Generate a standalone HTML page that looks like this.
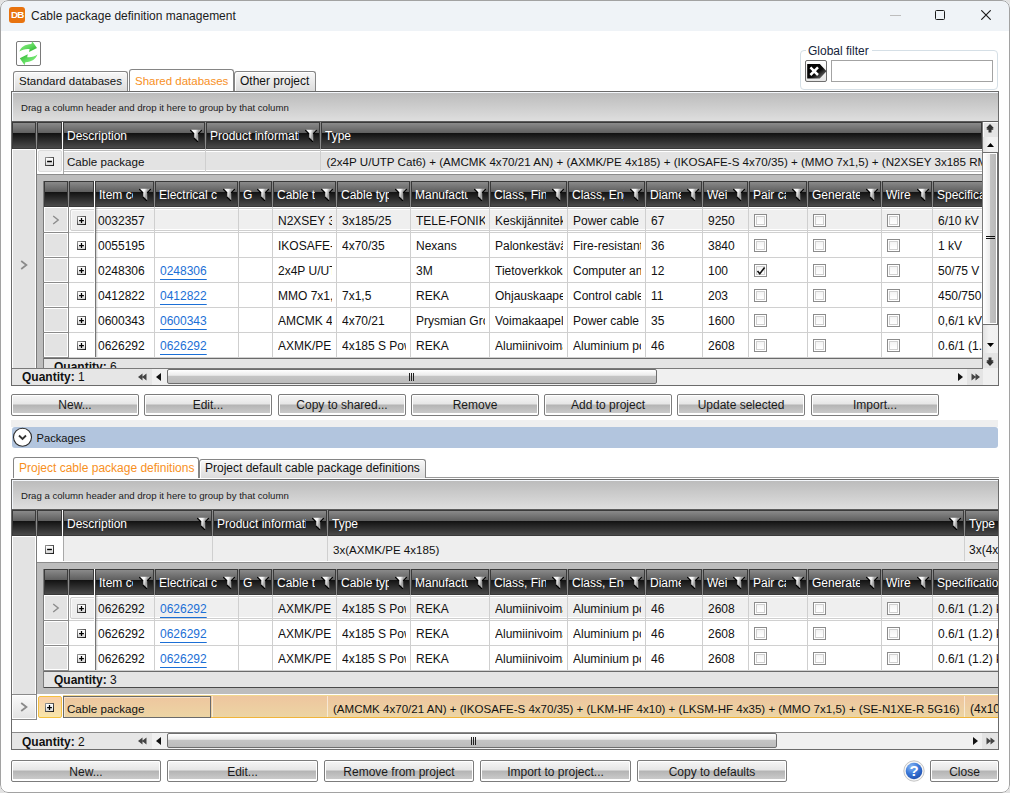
<!DOCTYPE html><html><head><meta charset="utf-8"><style>
*{margin:0;padding:0;box-sizing:border-box}
html,body{width:1010px;height:793px;overflow:hidden;background:#e2e2e2}
#w{position:absolute;left:0;top:0;width:1010px;height:793px;background:#fff;border-radius:8px;overflow:hidden;font-family:"Liberation Sans",sans-serif}
#w div{position:absolute}
#w svg{display:block}
#w span.t{position:absolute;white-space:nowrap;font-family:"Liberation Sans",sans-serif}
</style></head><body><div id="w">
<svg width="0" height="0" style="position:absolute"><defs><linearGradient id="fg" x1="0" y1="0" x2="1" y2="0.3"><stop offset="0" stop-color="#fff"/><stop offset="0.45" stop-color="#f4f4f4"/><stop offset="0.75" stop-color="#9a9a9a"/><stop offset="1" stop-color="#e0e0e0"/></linearGradient><linearGradient id="pb" x1="0" y1="0" x2="0" y2="1"><stop offset="0" stop-color="#fdfdfd"/><stop offset="0.5" stop-color="#f2f2f2"/><stop offset="1" stop-color="#d6d6d6"/></linearGradient><linearGradient id="pbs" x1="0" y1="0" x2="1" y2="1"><stop offset="0" stop-color="#a0a0a0"/><stop offset="0.5" stop-color="#505050"/><stop offset="1" stop-color="#151515"/></linearGradient></defs></svg>
<div style="left:0px;top:0px;width:1010px;height:31px;background:#eff3f7;"></div>
<div style="left:9px;top:7px;width:16px;height:16px;background:#e8730f;border-radius:3px;"></div>
<span class="t" style="left:11px;top:8.30px;font-size:9.8px;line-height:13px;color:#fff;font-weight:700;text-align:left;letter-spacing:-0.8px;">DB</span>
<span class="t" style="left:31px;top:7.64px;font-size:12px;line-height:16px;color:#1b1b1b;font-weight:400;text-align:left;">Cable package definition management</span>
<div style="left:890px;top:15px;width:11px;height:1px;background:#bdbdbd;"></div>
<div style="left:935px;top:10px;width:10px;height:10px;border:1px solid #1a1a1a;border-radius:1.5px;"></div>
<div style="left:981px;top:10px;width:10px;height:10px"><svg width="10" height="10"><path d="M0.3 0.3 L9.7 9.7 M9.7 0.3 L0.3 9.7" stroke="#1a1a1a" stroke-width="1.15"/></svg></div>
<div style="left:16px;top:41px;width:25px;height:25px;border:1px solid #7a7a7a;border-radius:2px;background:#fff;"></div>
<div style="left:12px;top:37px;width:34px;height:33px"><svg width="34" height="33" viewBox="0 0 34 33">
<defs><linearGradient id="gr" x1="0" y1="0" x2="1" y2="1"><stop offset="0" stop-color="#98f28a"/><stop offset="0.6" stop-color="#5ad65a"/><stop offset="1" stop-color="#22a822"/></linearGradient>
<linearGradient id="gr2" x1="1" y1="1" x2="0" y2="0"><stop offset="0" stop-color="#98f28a"/><stop offset="0.5" stop-color="#66e066"/><stop offset="1" stop-color="#2fb42f"/></linearGradient></defs>
<path d="M7.4 14.6 C8.8 10.2 13 7.2 19.4 7.0 L20.2 4.2 L25 10.9 L17 15 L17.6 12 C13.6 11.6 10.2 12.4 7.4 14.6 Z" fill="url(#gr)"/>
<path d="M25.4 17.6 C24 22 19.8 25 13.4 25.2 L12.6 28.3 L7.8 21.3 L15.8 17.2 L15.2 20.2 C19.2 20.6 22.6 19.8 25.4 17.6 Z" fill="url(#gr2)"/>
</svg></div>
<div style="left:800px;top:50px;width:198px;height:40px;border:1px solid #d5dfe6;border-radius:4px;"></div>
<div style="left:806px;top:44px;width:66px;height:12px;background:#fff;"></div>
<span class="t" style="left:808px;top:42.84px;font-size:12px;line-height:16px;color:#15233a;font-weight:400;text-align:left;">Global filter</span>
<div style="left:805px;top:60px;width:22px;height:22px;border:1px solid #6e6e6e;border-radius:2px;background:linear-gradient(#fff,#e6e6e6);"></div>
<div style="left:806px;top:63px;width:21px;height:17px"><svg width="21" height="17" viewBox="0 0 21 17">
<defs><linearGradient id="tg" x1="0" y1="0" x2="1" y2="1"><stop offset="0" stop-color="#000"/><stop offset="0.55" stop-color="#0a0a0a"/><stop offset="1" stop-color="#9a9a9a"/></linearGradient></defs>
<path d="M1.2 1 L13.8 1 L20.5 8.2 L13.8 15.6 L1.2 15.6 Z" fill="url(#tg)"/>
<path d="M4.4 4.4 L12 12 M12 4.4 L4.4 12" stroke="#fff" stroke-width="2.5"/>
</svg></div>
<div style="left:831px;top:60px;width:162px;height:22px;border:1px solid #a3a3a3;background:#fff;"></div>
<div style="left:13px;top:71px;width:115px;height:20px;border:1px solid #858585;border-bottom:none;border-radius:3px 3px 0 0;background:linear-gradient(#f8f8f8,#dcdcdc);box-shadow:inset 1px 1px 0 #fff;"></div>
<span class="t" style="left:19px;top:73.52px;font-size:11.5px;line-height:15px;color:#111;font-weight:400;text-align:left;">Standard databases</span>
<div style="left:234px;top:71px;width:82px;height:20px;border:1px solid #858585;border-bottom:none;border-radius:3px 3px 0 0;background:linear-gradient(#f8f8f8,#dcdcdc);box-shadow:inset 1px 1px 0 #fff;"></div>
<span class="t" style="left:240px;top:72.84px;font-size:12px;line-height:16px;color:#111;font-weight:400;text-align:left;">Other project</span>
<div style="left:129px;top:69px;width:105px;height:22px;border:1px solid #858585;border-bottom:none;border-radius:3px 3px 0 0;background:#fff;"></div>
<span class="t" style="left:135px;top:73.52px;font-size:11.5px;line-height:15px;color:#f7901e;font-weight:400;text-align:left;">Shared databases</span>
<div style="left:11px;top:91px;width:988px;height:295px;border:1px solid #6b6b6b;background:#fff;"></div>
<div style="left:12px;top:92px;width:986px;height:1px;background:#f4f7fb;"></div>
<div style="left:12px;top:93px;width:986px;height:28px;background:linear-gradient(#bcbcbc,#dedede);"></div>
<div style="left:12px;top:92px;width:1px;height:29px;background:#f4f7fb;"></div>
<span class="t" style="left:21px;top:102.17px;font-size:9.6px;line-height:12px;color:#1a1a1a;font-weight:400;text-align:left;">Drag a column header and drop it here to group by that column</span>
<div style="left:12px;top:121px;width:986px;height:1px;background:#5c5c5c;"></div>
<div style="left:12px;top:122px;width:24px;height:27px;background:linear-gradient(#8e8e8e 0%,#5e5e5e 42%,#111 42%,#1c1c1c 52%,#4e4e4e 100%);box-shadow:inset 0 0 0 1px #3a3a3a;"></div>
<div style="left:36px;top:122px;width:1px;height:27px;background:#8a8a8a;"></div>
<div style="left:37px;top:122px;width:25px;height:27px;background:linear-gradient(#8e8e8e 0%,#5e5e5e 42%,#111 42%,#1c1c1c 52%,#4e4e4e 100%);box-shadow:inset 0 0 0 1px #3a3a3a;"></div>
<div style="left:62px;top:122px;width:1px;height:27px;background:#fff;"></div>
<div style="left:63px;top:122px;width:142px;height:27px;background:linear-gradient(#8e8e8e 0%,#5e5e5e 42%,#111 42%,#1c1c1c 52%,#4e4e4e 100%);box-shadow:inset 0 0 0 1px #3a3a3a;"></div>
<div style="left:205px;top:122px;width:1px;height:27px;background:#8a8a8a;"></div>
<div style="left:67px;top:122px;width:117px;height:27px;overflow:hidden">
<span class="t" style="left:0px;top:6.34px;font-size:12px;line-height:16px;color:#fff;font-weight:400;text-align:left;">Description</span>
</div>
<div style="left:190px;top:129px;width:13px;height:13px"><svg width="13" height="13" viewBox="0 0 13 13"><path d="M1.2 0.8 L10.8 0.8 L8.2 4.2 L8.2 12.2 L4.3 8.6 L4.3 4.2 Z" fill="url(#fg)"/><path d="M0.2 1.1 L3.9 4.9 M11.8 1.1 L8.1 4.9 M3.9 9.1 L7.9 13" fill="none" stroke="#000" stroke-width="1.05"/></svg></div>
<div style="left:206px;top:122px;width:114px;height:27px;background:linear-gradient(#8e8e8e 0%,#5e5e5e 42%,#111 42%,#1c1c1c 52%,#4e4e4e 100%);box-shadow:inset 0 0 0 1px #3a3a3a;"></div>
<div style="left:320px;top:122px;width:1px;height:27px;background:#8a8a8a;"></div>
<div style="left:210px;top:122px;width:89px;height:27px;overflow:hidden">
<span class="t" style="left:0px;top:6.34px;font-size:12px;line-height:16px;color:#fff;font-weight:400;text-align:left;">Product information</span>
</div>
<div style="left:305px;top:129px;width:13px;height:13px"><svg width="13" height="13" viewBox="0 0 13 13"><path d="M1.2 0.8 L10.8 0.8 L8.2 4.2 L8.2 12.2 L4.3 8.6 L4.3 4.2 Z" fill="url(#fg)"/><path d="M0.2 1.1 L3.9 4.9 M11.8 1.1 L8.1 4.9 M3.9 9.1 L7.9 13" fill="none" stroke="#000" stroke-width="1.05"/></svg></div>
<div style="left:321px;top:122px;width:661px;height:27px;background:linear-gradient(#8e8e8e 0%,#5e5e5e 42%,#111 42%,#1c1c1c 52%,#4e4e4e 100%);box-shadow:inset 0 0 0 1px #3a3a3a;"></div>
<div style="left:982px;top:122px;width:1px;height:27px;background:#8a8a8a;"></div>
<div style="left:325px;top:122px;width:656px;height:27px;overflow:hidden">
<span class="t" style="left:0px;top:6.34px;font-size:12px;line-height:16px;color:#fff;font-weight:400;text-align:left;">Type</span>
</div>
<div style="left:12px;top:149px;width:24px;height:219px;background:#e3e3e3;box-shadow:inset 1px 1px 0 #fff;"></div>
<div style="left:35px;top:149px;width:1px;height:219px;background:#fff;"></div>
<div style="left:36px;top:149px;width:1px;height:219px;background:#7a7a7a;"></div>
<div style="left:20px;top:260px;width:8px;height:10px"><svg width="8" height="10" viewBox="0 0 8 10"><path d="M1.2 1 L6.4 5 L1.2 9" fill="none" stroke="#8a8a8a" stroke-width="1.7"/></svg></div>
<div style="left:37px;top:149px;width:26px;height:25px;background:#fff;"></div>
<div style="left:38px;top:150px;width:24px;height:22px;background:#eeeeee;border:1px solid #dcdcdc;border-radius:2px;"></div>
<div style="left:45px;top:157px;width:9px;height:9px"><svg width="9" height="9" viewBox="0 0 9 9"><rect x="0" y="0" width="9" height="9" fill="url(#pbs)"/><rect x="1" y="1" width="7" height="7" fill="url(#pb)"/><path d="M2.1 4.5 H6.9" stroke="#000" stroke-width="1.4"/></svg></div>
<div style="left:62px;top:122px;width:1px;height:52px;background:#fff;"></div>
<div style="left:63px;top:149px;width:919px;height:25px;background:#e3e3e3;box-shadow:inset 0 1px 0 #fff,inset 0 2px 0 #b8b8b8,inset 0 3px 0 #fff,inset 0 -1px 0 #fff,inset 0 -2px 0 #fff,inset 0 -3px 0 #b8b8b8,inset 0 -4px 0 #fff;"></div>
<div style="left:63px;top:149px;width:1px;height:25px;background:#a8a8a8;"></div>
<div style="left:205px;top:149px;width:1px;height:23px;background:#cfcfcf;"></div>
<div style="left:320px;top:149px;width:1px;height:23px;background:#cfcfcf;"></div>
<span class="t" style="left:67px;top:154.48px;font-size:11.6px;line-height:15px;color:#111;font-weight:400;text-align:left;">Cable package</span>
<div style="left:321px;top:149px;width:661px;height:23px;overflow:hidden">
<span class="t" style="left:5.5px;top:5.48px;font-size:11.6px;line-height:15px;color:#111;font-weight:400;text-align:left;">(2x4P U/UTP Cat6) + (AMCMK 4x70/21 AN) + (AXMK/PE 4x185) + (IKOSAFE-S 4x70/35) + (MMO 7x1,5) + (N2XSEY 3x185 RM/25)</span>
</div>
<div style="left:37px;top:174px;width:945px;height:194px;background:#bdbdbd;border-top:1px solid #8c8c8c;"></div>
<div style="left:0px;top:0px;width:982px;height:368px;overflow:hidden">
<div style="left:0px;top:0px;width:982px;height:800px;overflow:hidden">
<div style="left:43px;top:181px;width:2000px;height:177px;background:#fff;"></div>
<div style="left:43px;top:181px;width:1px;height:194px;background:#7a7a7a;"></div>
<div style="left:44px;top:181px;width:24px;height:26px;background:linear-gradient(#8e8e8e 0%,#5e5e5e 42%,#111 42%,#1c1c1c 52%,#4e4e4e 100%);box-shadow:inset 0 0 0 1px #3a3a3a;"></div>
<div style="left:68px;top:181px;width:1px;height:26px;background:#8a8a8a;"></div>
<div style="left:69px;top:181px;width:25px;height:26px;background:linear-gradient(#8e8e8e 0%,#5e5e5e 42%,#111 42%,#1c1c1c 52%,#4e4e4e 100%);box-shadow:inset 0 0 0 1px #3a3a3a;"></div>
<div style="left:95px;top:181px;width:59px;height:26px;background:linear-gradient(#8e8e8e 0%,#5e5e5e 42%,#111 42%,#1c1c1c 52%,#4e4e4e 100%);box-shadow:inset 0 0 0 1px #3a3a3a;"></div>
<div style="left:154px;top:181px;width:1px;height:26px;background:#8a8a8a;"></div>
<div style="left:99px;top:181px;width:34px;height:26px;overflow:hidden">
<span class="t" style="left:0px;top:5.84px;font-size:12px;line-height:16px;color:#fff;font-weight:400;text-align:left;">Item code</span>
</div>
<div style="left:139px;top:188px;width:13px;height:13px"><svg width="13" height="13" viewBox="0 0 13 13"><path d="M1.2 0.8 L10.8 0.8 L8.2 4.2 L8.2 12.2 L4.3 8.6 L4.3 4.2 Z" fill="url(#fg)"/><path d="M0.2 1.1 L3.9 4.9 M11.8 1.1 L8.1 4.9 M3.9 9.1 L7.9 13" fill="none" stroke="#000" stroke-width="1.05"/></svg></div>
<div style="left:155px;top:181px;width:83px;height:26px;background:linear-gradient(#8e8e8e 0%,#5e5e5e 42%,#111 42%,#1c1c1c 52%,#4e4e4e 100%);box-shadow:inset 0 0 0 1px #3a3a3a;"></div>
<div style="left:238px;top:181px;width:1px;height:26px;background:#8a8a8a;"></div>
<div style="left:159px;top:181px;width:58px;height:26px;overflow:hidden">
<span class="t" style="left:0px;top:5.84px;font-size:12px;line-height:16px;color:#fff;font-weight:400;text-align:left;">Electrical code</span>
</div>
<div style="left:223px;top:188px;width:13px;height:13px"><svg width="13" height="13" viewBox="0 0 13 13"><path d="M1.2 0.8 L10.8 0.8 L8.2 4.2 L8.2 12.2 L4.3 8.6 L4.3 4.2 Z" fill="url(#fg)"/><path d="M0.2 1.1 L3.9 4.9 M11.8 1.1 L8.1 4.9 M3.9 9.1 L7.9 13" fill="none" stroke="#000" stroke-width="1.05"/></svg></div>
<div style="left:239px;top:181px;width:33px;height:26px;background:linear-gradient(#8e8e8e 0%,#5e5e5e 42%,#111 42%,#1c1c1c 52%,#4e4e4e 100%);box-shadow:inset 0 0 0 1px #3a3a3a;"></div>
<div style="left:272px;top:181px;width:1px;height:26px;background:#8a8a8a;"></div>
<div style="left:243px;top:181px;width:10px;height:26px;overflow:hidden">
<span class="t" style="left:0px;top:5.84px;font-size:12px;line-height:16px;color:#fff;font-weight:400;text-align:left;">G</span>
</div>
<div style="left:257px;top:188px;width:13px;height:13px"><svg width="13" height="13" viewBox="0 0 13 13"><path d="M1.2 0.8 L10.8 0.8 L8.2 4.2 L8.2 12.2 L4.3 8.6 L4.3 4.2 Z" fill="url(#fg)"/><path d="M0.2 1.1 L3.9 4.9 M11.8 1.1 L8.1 4.9 M3.9 9.1 L7.9 13" fill="none" stroke="#000" stroke-width="1.05"/></svg></div>
<div style="left:273px;top:181px;width:63px;height:26px;background:linear-gradient(#8e8e8e 0%,#5e5e5e 42%,#111 42%,#1c1c1c 52%,#4e4e4e 100%);box-shadow:inset 0 0 0 1px #3a3a3a;"></div>
<div style="left:336px;top:181px;width:1px;height:26px;background:#8a8a8a;"></div>
<div style="left:277px;top:181px;width:38px;height:26px;overflow:hidden">
<span class="t" style="left:0px;top:5.84px;font-size:12px;line-height:16px;color:#fff;font-weight:400;text-align:left;">Cable type</span>
</div>
<div style="left:321px;top:188px;width:13px;height:13px"><svg width="13" height="13" viewBox="0 0 13 13"><path d="M1.2 0.8 L10.8 0.8 L8.2 4.2 L8.2 12.2 L4.3 8.6 L4.3 4.2 Z" fill="url(#fg)"/><path d="M0.2 1.1 L3.9 4.9 M11.8 1.1 L8.1 4.9 M3.9 9.1 L7.9 13" fill="none" stroke="#000" stroke-width="1.05"/></svg></div>
<div style="left:337px;top:181px;width:73px;height:26px;background:linear-gradient(#8e8e8e 0%,#5e5e5e 42%,#111 42%,#1c1c1c 52%,#4e4e4e 100%);box-shadow:inset 0 0 0 1px #3a3a3a;"></div>
<div style="left:410px;top:181px;width:1px;height:26px;background:#8a8a8a;"></div>
<div style="left:341px;top:181px;width:48px;height:26px;overflow:hidden">
<span class="t" style="left:0px;top:5.84px;font-size:12px;line-height:16px;color:#fff;font-weight:400;text-align:left;">Cable type</span>
</div>
<div style="left:395px;top:188px;width:13px;height:13px"><svg width="13" height="13" viewBox="0 0 13 13"><path d="M1.2 0.8 L10.8 0.8 L8.2 4.2 L8.2 12.2 L4.3 8.6 L4.3 4.2 Z" fill="url(#fg)"/><path d="M0.2 1.1 L3.9 4.9 M11.8 1.1 L8.1 4.9 M3.9 9.1 L7.9 13" fill="none" stroke="#000" stroke-width="1.05"/></svg></div>
<div style="left:411px;top:181px;width:78px;height:26px;background:linear-gradient(#8e8e8e 0%,#5e5e5e 42%,#111 42%,#1c1c1c 52%,#4e4e4e 100%);box-shadow:inset 0 0 0 1px #3a3a3a;"></div>
<div style="left:489px;top:181px;width:1px;height:26px;background:#8a8a8a;"></div>
<div style="left:415px;top:181px;width:53px;height:26px;overflow:hidden">
<span class="t" style="left:0px;top:5.84px;font-size:12px;line-height:16px;color:#fff;font-weight:400;text-align:left;">Manufacturer</span>
</div>
<div style="left:474px;top:188px;width:13px;height:13px"><svg width="13" height="13" viewBox="0 0 13 13"><path d="M1.2 0.8 L10.8 0.8 L8.2 4.2 L8.2 12.2 L4.3 8.6 L4.3 4.2 Z" fill="url(#fg)"/><path d="M0.2 1.1 L3.9 4.9 M11.8 1.1 L8.1 4.9 M3.9 9.1 L7.9 13" fill="none" stroke="#000" stroke-width="1.05"/></svg></div>
<div style="left:490px;top:181px;width:77px;height:26px;background:linear-gradient(#8e8e8e 0%,#5e5e5e 42%,#111 42%,#1c1c1c 52%,#4e4e4e 100%);box-shadow:inset 0 0 0 1px #3a3a3a;"></div>
<div style="left:567px;top:181px;width:1px;height:26px;background:#8a8a8a;"></div>
<div style="left:494px;top:181px;width:52px;height:26px;overflow:hidden">
<span class="t" style="left:0px;top:5.84px;font-size:12px;line-height:16px;color:#fff;font-weight:400;text-align:left;">Class, Finnish</span>
</div>
<div style="left:552px;top:188px;width:13px;height:13px"><svg width="13" height="13" viewBox="0 0 13 13"><path d="M1.2 0.8 L10.8 0.8 L8.2 4.2 L8.2 12.2 L4.3 8.6 L4.3 4.2 Z" fill="url(#fg)"/><path d="M0.2 1.1 L3.9 4.9 M11.8 1.1 L8.1 4.9 M3.9 9.1 L7.9 13" fill="none" stroke="#000" stroke-width="1.05"/></svg></div>
<div style="left:568px;top:181px;width:77px;height:26px;background:linear-gradient(#8e8e8e 0%,#5e5e5e 42%,#111 42%,#1c1c1c 52%,#4e4e4e 100%);box-shadow:inset 0 0 0 1px #3a3a3a;"></div>
<div style="left:645px;top:181px;width:1px;height:26px;background:#8a8a8a;"></div>
<div style="left:572px;top:181px;width:52px;height:26px;overflow:hidden">
<span class="t" style="left:0px;top:5.84px;font-size:12px;line-height:16px;color:#fff;font-weight:400;text-align:left;">Class, English</span>
</div>
<div style="left:630px;top:188px;width:13px;height:13px"><svg width="13" height="13" viewBox="0 0 13 13"><path d="M1.2 0.8 L10.8 0.8 L8.2 4.2 L8.2 12.2 L4.3 8.6 L4.3 4.2 Z" fill="url(#fg)"/><path d="M0.2 1.1 L3.9 4.9 M11.8 1.1 L8.1 4.9 M3.9 9.1 L7.9 13" fill="none" stroke="#000" stroke-width="1.05"/></svg></div>
<div style="left:646px;top:181px;width:56px;height:26px;background:linear-gradient(#8e8e8e 0%,#5e5e5e 42%,#111 42%,#1c1c1c 52%,#4e4e4e 100%);box-shadow:inset 0 0 0 1px #3a3a3a;"></div>
<div style="left:702px;top:181px;width:1px;height:26px;background:#8a8a8a;"></div>
<div style="left:650px;top:181px;width:31px;height:26px;overflow:hidden">
<span class="t" style="left:0px;top:5.84px;font-size:12px;line-height:16px;color:#fff;font-weight:400;text-align:left;">Diameter</span>
</div>
<div style="left:687px;top:188px;width:13px;height:13px"><svg width="13" height="13" viewBox="0 0 13 13"><path d="M1.2 0.8 L10.8 0.8 L8.2 4.2 L8.2 12.2 L4.3 8.6 L4.3 4.2 Z" fill="url(#fg)"/><path d="M0.2 1.1 L3.9 4.9 M11.8 1.1 L8.1 4.9 M3.9 9.1 L7.9 13" fill="none" stroke="#000" stroke-width="1.05"/></svg></div>
<div style="left:703px;top:181px;width:45px;height:26px;background:linear-gradient(#8e8e8e 0%,#5e5e5e 42%,#111 42%,#1c1c1c 52%,#4e4e4e 100%);box-shadow:inset 0 0 0 1px #3a3a3a;"></div>
<div style="left:748px;top:181px;width:1px;height:26px;background:#8a8a8a;"></div>
<div style="left:707px;top:181px;width:20px;height:26px;overflow:hidden">
<span class="t" style="left:0px;top:5.84px;font-size:12px;line-height:16px;color:#fff;font-weight:400;text-align:left;">Weight</span>
</div>
<div style="left:733px;top:188px;width:13px;height:13px"><svg width="13" height="13" viewBox="0 0 13 13"><path d="M1.2 0.8 L10.8 0.8 L8.2 4.2 L8.2 12.2 L4.3 8.6 L4.3 4.2 Z" fill="url(#fg)"/><path d="M0.2 1.1 L3.9 4.9 M11.8 1.1 L8.1 4.9 M3.9 9.1 L7.9 13" fill="none" stroke="#000" stroke-width="1.05"/></svg></div>
<div style="left:749px;top:181px;width:58px;height:26px;background:linear-gradient(#8e8e8e 0%,#5e5e5e 42%,#111 42%,#1c1c1c 52%,#4e4e4e 100%);box-shadow:inset 0 0 0 1px #3a3a3a;"></div>
<div style="left:807px;top:181px;width:1px;height:26px;background:#8a8a8a;"></div>
<div style="left:753px;top:181px;width:33px;height:26px;overflow:hidden">
<span class="t" style="left:0px;top:5.84px;font-size:12px;line-height:16px;color:#fff;font-weight:400;text-align:left;">Pair cable</span>
</div>
<div style="left:792px;top:188px;width:13px;height:13px"><svg width="13" height="13" viewBox="0 0 13 13"><path d="M1.2 0.8 L10.8 0.8 L8.2 4.2 L8.2 12.2 L4.3 8.6 L4.3 4.2 Z" fill="url(#fg)"/><path d="M0.2 1.1 L3.9 4.9 M11.8 1.1 L8.1 4.9 M3.9 9.1 L7.9 13" fill="none" stroke="#000" stroke-width="1.05"/></svg></div>
<div style="left:808px;top:181px;width:73px;height:26px;background:linear-gradient(#8e8e8e 0%,#5e5e5e 42%,#111 42%,#1c1c1c 52%,#4e4e4e 100%);box-shadow:inset 0 0 0 1px #3a3a3a;"></div>
<div style="left:881px;top:181px;width:1px;height:26px;background:#8a8a8a;"></div>
<div style="left:812px;top:181px;width:48px;height:26px;overflow:hidden">
<span class="t" style="left:0px;top:5.84px;font-size:12px;line-height:16px;color:#fff;font-weight:400;text-align:left;">Generate</span>
</div>
<div style="left:866px;top:188px;width:13px;height:13px"><svg width="13" height="13" viewBox="0 0 13 13"><path d="M1.2 0.8 L10.8 0.8 L8.2 4.2 L8.2 12.2 L4.3 8.6 L4.3 4.2 Z" fill="url(#fg)"/><path d="M0.2 1.1 L3.9 4.9 M11.8 1.1 L8.1 4.9 M3.9 9.1 L7.9 13" fill="none" stroke="#000" stroke-width="1.05"/></svg></div>
<div style="left:882px;top:181px;width:50px;height:26px;background:linear-gradient(#8e8e8e 0%,#5e5e5e 42%,#111 42%,#1c1c1c 52%,#4e4e4e 100%);box-shadow:inset 0 0 0 1px #3a3a3a;"></div>
<div style="left:932px;top:181px;width:1px;height:26px;background:#8a8a8a;"></div>
<div style="left:886px;top:181px;width:25px;height:26px;overflow:hidden">
<span class="t" style="left:0px;top:5.84px;font-size:12px;line-height:16px;color:#fff;font-weight:400;text-align:left;">Wire</span>
</div>
<div style="left:917px;top:188px;width:13px;height:13px"><svg width="13" height="13" viewBox="0 0 13 13"><path d="M1.2 0.8 L10.8 0.8 L8.2 4.2 L8.2 12.2 L4.3 8.6 L4.3 4.2 Z" fill="url(#fg)"/><path d="M0.2 1.1 L3.9 4.9 M11.8 1.1 L8.1 4.9 M3.9 9.1 L7.9 13" fill="none" stroke="#000" stroke-width="1.05"/></svg></div>
<div style="left:933px;top:181px;width:167px;height:26px;background:linear-gradient(#8e8e8e 0%,#5e5e5e 42%,#111 42%,#1c1c1c 52%,#4e4e4e 100%);box-shadow:inset 0 0 0 1px #3a3a3a;"></div>
<div style="left:1100px;top:181px;width:1px;height:26px;background:#8a8a8a;"></div>
<div style="left:937px;top:181px;width:142px;height:26px;overflow:hidden">
<span class="t" style="left:0px;top:5.84px;font-size:12px;line-height:16px;color:#fff;font-weight:400;text-align:left;">Specification</span>
</div>
<div style="left:1085px;top:188px;width:13px;height:13px"><svg width="13" height="13" viewBox="0 0 13 13"><path d="M1.2 0.8 L10.8 0.8 L8.2 4.2 L8.2 12.2 L4.3 8.6 L4.3 4.2 Z" fill="url(#fg)"/><path d="M0.2 1.1 L3.9 4.9 M11.8 1.1 L8.1 4.9 M3.9 9.1 L7.9 13" fill="none" stroke="#000" stroke-width="1.05"/></svg></div>
<div style="left:95px;top:207px;width:2000px;height:25px;background:#efefef;border-top:1px solid #fff;box-shadow:inset 0 1px 0 #cfcfcf,inset 0 2px 0 #fff,inset 0 -1px 0 #fff,inset 0 -2px 0 #cfcfcf,inset 0 -3px 0 #fff;"></div>
<div style="left:44px;top:207px;width:24px;height:25px;background:#e3e3e3;box-shadow:inset 0 0 0 1px #fff;"></div>
<div style="left:52px;top:215px;width:8px;height:10px"><svg width="8" height="10" viewBox="0 0 8 10"><path d="M1.2 1 L6.2 5 L1.2 9" fill="none" stroke="#8c8c8c" stroke-width="1.4"/></svg></div>
<div style="left:70px;top:209px;width:26px;height:22px;background:#eeeeee;border:1px solid #d0d0d0;border-radius:2px;box-shadow:inset 1px 1px 0 #fafafa;"></div>
<div style="left:77px;top:216px;width:9px;height:9px"><svg width="9" height="9" viewBox="0 0 9 9"><rect x="0" y="0" width="9" height="9" fill="url(#pbs)"/><rect x="1" y="1" width="7" height="7" fill="url(#pb)"/><path d="M2.1 4.5 H6.9 M4.5 2.1 V6.9" stroke="#000" stroke-width="1.25"/></svg></div>
<div style="left:98px;top:207px;width:55px;height:25px;overflow:hidden">
<span class="t" style="left:0px;top:5.84px;font-size:12px;line-height:16px;color:#111;font-weight:400;text-align:left;">0032357</span>
</div>
<div style="left:278px;top:207px;width:54px;height:25px;overflow:hidden">
<span class="t" style="left:0px;top:5.84px;font-size:12px;line-height:16px;color:#111;font-weight:400;text-align:left;">N2XSEY 3x185/25</span>
</div>
<div style="left:342px;top:207px;width:64px;height:25px;overflow:hidden">
<span class="t" style="left:0px;top:5.84px;font-size:12px;line-height:16px;color:#111;font-weight:400;text-align:left;">3x185/25</span>
</div>
<div style="left:416px;top:207px;width:69px;height:25px;overflow:hidden">
<span class="t" style="left:0px;top:5.84px;font-size:12px;line-height:16px;color:#111;font-weight:400;text-align:left;">TELE-FONIKA Kable</span>
</div>
<div style="left:495px;top:207px;width:68px;height:25px;overflow:hidden">
<span class="t" style="left:0px;top:5.84px;font-size:12px;line-height:16px;color:#111;font-weight:400;text-align:left;">Keskijännitekaapeli</span>
</div>
<div style="left:573px;top:207px;width:68px;height:25px;overflow:hidden">
<span class="t" style="left:0px;top:5.84px;font-size:12px;line-height:16px;color:#111;font-weight:400;text-align:left;">Power cable for medium</span>
</div>
<div style="left:651px;top:207px;width:47px;height:25px;overflow:hidden">
<span class="t" style="left:0px;top:5.84px;font-size:12px;line-height:16px;color:#111;font-weight:400;text-align:left;">67</span>
</div>
<div style="left:708px;top:207px;width:36px;height:25px;overflow:hidden">
<span class="t" style="left:0px;top:5.84px;font-size:12px;line-height:16px;color:#111;font-weight:400;text-align:left;">9250</span>
</div>
<div style="left:754px;top:214px;width:13px;height:13px;border:1px solid #8c8c8c;background:#fff;"></div>
<div style="left:756px;top:216px;width:9px;height:9px;border:1px solid #d0d0d0;background:linear-gradient(#f4f4f4,#fff);"></div>
<div style="left:813px;top:214px;width:13px;height:13px;border:1px solid #8c8c8c;background:#fff;"></div>
<div style="left:815px;top:216px;width:9px;height:9px;border:1px solid #d0d0d0;background:linear-gradient(#f4f4f4,#fff);"></div>
<div style="left:887px;top:214px;width:13px;height:13px;border:1px solid #8c8c8c;background:#fff;"></div>
<div style="left:889px;top:216px;width:9px;height:9px;border:1px solid #d0d0d0;background:linear-gradient(#f4f4f4,#fff);"></div>
<div style="left:938px;top:207px;width:158px;height:25px;overflow:hidden">
<span class="t" style="left:0px;top:5.84px;font-size:12px;line-height:16px;color:#111;font-weight:400;text-align:left;">6/10 kV</span>
</div>
<div style="left:44px;top:233px;width:24px;height:24px;background:#e3e3e3;box-shadow:inset 0 0 0 1px #fff;"></div>
<div style="left:77px;top:241px;width:9px;height:9px"><svg width="9" height="9" viewBox="0 0 9 9"><rect x="0" y="0" width="9" height="9" fill="url(#pbs)"/><rect x="1" y="1" width="7" height="7" fill="url(#pb)"/><path d="M2.1 4.5 H6.9 M4.5 2.1 V6.9" stroke="#000" stroke-width="1.25"/></svg></div>
<div style="left:98px;top:232px;width:55px;height:25px;overflow:hidden">
<span class="t" style="left:0px;top:5.84px;font-size:12px;line-height:16px;color:#111;font-weight:400;text-align:left;">0055195</span>
</div>
<div style="left:278px;top:232px;width:54px;height:25px;overflow:hidden">
<span class="t" style="left:0px;top:5.84px;font-size:12px;line-height:16px;color:#111;font-weight:400;text-align:left;">IKOSAFE-S 4x70/35</span>
</div>
<div style="left:342px;top:232px;width:64px;height:25px;overflow:hidden">
<span class="t" style="left:0px;top:5.84px;font-size:12px;line-height:16px;color:#111;font-weight:400;text-align:left;">4x70/35</span>
</div>
<div style="left:416px;top:232px;width:69px;height:25px;overflow:hidden">
<span class="t" style="left:0px;top:5.84px;font-size:12px;line-height:16px;color:#111;font-weight:400;text-align:left;">Nexans</span>
</div>
<div style="left:495px;top:232px;width:68px;height:25px;overflow:hidden">
<span class="t" style="left:0px;top:5.84px;font-size:12px;line-height:16px;color:#111;font-weight:400;text-align:left;">Palonkestävä</span>
</div>
<div style="left:573px;top:232px;width:68px;height:25px;overflow:hidden">
<span class="t" style="left:0px;top:5.84px;font-size:12px;line-height:16px;color:#111;font-weight:400;text-align:left;">Fire-resistant cable</span>
</div>
<div style="left:651px;top:232px;width:47px;height:25px;overflow:hidden">
<span class="t" style="left:0px;top:5.84px;font-size:12px;line-height:16px;color:#111;font-weight:400;text-align:left;">36</span>
</div>
<div style="left:708px;top:232px;width:36px;height:25px;overflow:hidden">
<span class="t" style="left:0px;top:5.84px;font-size:12px;line-height:16px;color:#111;font-weight:400;text-align:left;">3840</span>
</div>
<div style="left:754px;top:239px;width:13px;height:13px;border:1px solid #8c8c8c;background:#fff;"></div>
<div style="left:756px;top:241px;width:9px;height:9px;border:1px solid #d0d0d0;background:linear-gradient(#f4f4f4,#fff);"></div>
<div style="left:813px;top:239px;width:13px;height:13px;border:1px solid #8c8c8c;background:#fff;"></div>
<div style="left:815px;top:241px;width:9px;height:9px;border:1px solid #d0d0d0;background:linear-gradient(#f4f4f4,#fff);"></div>
<div style="left:887px;top:239px;width:13px;height:13px;border:1px solid #8c8c8c;background:#fff;"></div>
<div style="left:889px;top:241px;width:9px;height:9px;border:1px solid #d0d0d0;background:linear-gradient(#f4f4f4,#fff);"></div>
<div style="left:938px;top:232px;width:158px;height:25px;overflow:hidden">
<span class="t" style="left:0px;top:5.84px;font-size:12px;line-height:16px;color:#111;font-weight:400;text-align:left;">1 kV</span>
</div>
<div style="left:44px;top:258px;width:24px;height:24px;background:#e3e3e3;box-shadow:inset 0 0 0 1px #fff;"></div>
<div style="left:77px;top:266px;width:9px;height:9px"><svg width="9" height="9" viewBox="0 0 9 9"><rect x="0" y="0" width="9" height="9" fill="url(#pbs)"/><rect x="1" y="1" width="7" height="7" fill="url(#pb)"/><path d="M2.1 4.5 H6.9 M4.5 2.1 V6.9" stroke="#000" stroke-width="1.25"/></svg></div>
<div style="left:98px;top:257px;width:55px;height:25px;overflow:hidden">
<span class="t" style="left:0px;top:5.84px;font-size:12px;line-height:16px;color:#111;font-weight:400;text-align:left;">0248306</span>
</div>
<div style="left:160px;top:257px;width:74px;height:25px;overflow:hidden">
<span class="t" style="left:0px;top:5.84px;font-size:12px;line-height:16px;color:#1b6fd6;font-weight:400;text-align:left;text-decoration:underline;text-underline-offset:4.4px;text-decoration-thickness:1px;">0248306</span>
</div>
<div style="left:278px;top:257px;width:54px;height:25px;overflow:hidden">
<span class="t" style="left:0px;top:5.84px;font-size:12px;line-height:16px;color:#111;font-weight:400;text-align:left;">2x4P U/UTP Cat6</span>
</div>
<div style="left:416px;top:257px;width:69px;height:25px;overflow:hidden">
<span class="t" style="left:0px;top:5.84px;font-size:12px;line-height:16px;color:#111;font-weight:400;text-align:left;">3M</span>
</div>
<div style="left:495px;top:257px;width:68px;height:25px;overflow:hidden">
<span class="t" style="left:0px;top:5.84px;font-size:12px;line-height:16px;color:#111;font-weight:400;text-align:left;">Tietoverkkokaapeli</span>
</div>
<div style="left:573px;top:257px;width:68px;height:25px;overflow:hidden">
<span class="t" style="left:0px;top:5.84px;font-size:12px;line-height:16px;color:#111;font-weight:400;text-align:left;">Computer and data</span>
</div>
<div style="left:651px;top:257px;width:47px;height:25px;overflow:hidden">
<span class="t" style="left:0px;top:5.84px;font-size:12px;line-height:16px;color:#111;font-weight:400;text-align:left;">12</span>
</div>
<div style="left:708px;top:257px;width:36px;height:25px;overflow:hidden">
<span class="t" style="left:0px;top:5.84px;font-size:12px;line-height:16px;color:#111;font-weight:400;text-align:left;">100</span>
</div>
<div style="left:754px;top:264px;width:13px;height:13px;border:1px solid #8c8c8c;background:#fff;"></div>
<div style="left:756px;top:266px;width:9px;height:9px;border:1px solid #d0d0d0;background:linear-gradient(#f4f4f4,#fff);"></div>
<div style="left:756px;top:266px;width:10px;height:10px"><svg width="10" height="10" viewBox="0 0 10 10"><path d="M1.5 5 L3.8 7.8 L8.6 1.5" fill="none" stroke="#111" stroke-width="1.6"/></svg></div>
<div style="left:813px;top:264px;width:13px;height:13px;border:1px solid #8c8c8c;background:#fff;"></div>
<div style="left:815px;top:266px;width:9px;height:9px;border:1px solid #d0d0d0;background:linear-gradient(#f4f4f4,#fff);"></div>
<div style="left:887px;top:264px;width:13px;height:13px;border:1px solid #8c8c8c;background:#fff;"></div>
<div style="left:889px;top:266px;width:9px;height:9px;border:1px solid #d0d0d0;background:linear-gradient(#f4f4f4,#fff);"></div>
<div style="left:938px;top:257px;width:158px;height:25px;overflow:hidden">
<span class="t" style="left:0px;top:5.84px;font-size:12px;line-height:16px;color:#111;font-weight:400;text-align:left;">50/75 V</span>
</div>
<div style="left:44px;top:283px;width:24px;height:24px;background:#e3e3e3;box-shadow:inset 0 0 0 1px #fff;"></div>
<div style="left:77px;top:291px;width:9px;height:9px"><svg width="9" height="9" viewBox="0 0 9 9"><rect x="0" y="0" width="9" height="9" fill="url(#pbs)"/><rect x="1" y="1" width="7" height="7" fill="url(#pb)"/><path d="M2.1 4.5 H6.9 M4.5 2.1 V6.9" stroke="#000" stroke-width="1.25"/></svg></div>
<div style="left:98px;top:282px;width:55px;height:25px;overflow:hidden">
<span class="t" style="left:0px;top:5.84px;font-size:12px;line-height:16px;color:#111;font-weight:400;text-align:left;">0412822</span>
</div>
<div style="left:160px;top:282px;width:74px;height:25px;overflow:hidden">
<span class="t" style="left:0px;top:5.84px;font-size:12px;line-height:16px;color:#1b6fd6;font-weight:400;text-align:left;text-decoration:underline;text-underline-offset:4.4px;text-decoration-thickness:1px;">0412822</span>
</div>
<div style="left:278px;top:282px;width:54px;height:25px;overflow:hidden">
<span class="t" style="left:0px;top:5.84px;font-size:12px;line-height:16px;color:#111;font-weight:400;text-align:left;">MMO 7x1,5</span>
</div>
<div style="left:342px;top:282px;width:64px;height:25px;overflow:hidden">
<span class="t" style="left:0px;top:5.84px;font-size:12px;line-height:16px;color:#111;font-weight:400;text-align:left;">7x1,5</span>
</div>
<div style="left:416px;top:282px;width:69px;height:25px;overflow:hidden">
<span class="t" style="left:0px;top:5.84px;font-size:12px;line-height:16px;color:#111;font-weight:400;text-align:left;">REKA</span>
</div>
<div style="left:495px;top:282px;width:68px;height:25px;overflow:hidden">
<span class="t" style="left:0px;top:5.84px;font-size:12px;line-height:16px;color:#111;font-weight:400;text-align:left;">Ohjauskaapeli</span>
</div>
<div style="left:573px;top:282px;width:68px;height:25px;overflow:hidden">
<span class="t" style="left:0px;top:5.84px;font-size:12px;line-height:16px;color:#111;font-weight:400;text-align:left;">Control cable</span>
</div>
<div style="left:651px;top:282px;width:47px;height:25px;overflow:hidden">
<span class="t" style="left:0px;top:5.84px;font-size:12px;line-height:16px;color:#111;font-weight:400;text-align:left;">11</span>
</div>
<div style="left:708px;top:282px;width:36px;height:25px;overflow:hidden">
<span class="t" style="left:0px;top:5.84px;font-size:12px;line-height:16px;color:#111;font-weight:400;text-align:left;">203</span>
</div>
<div style="left:754px;top:289px;width:13px;height:13px;border:1px solid #8c8c8c;background:#fff;"></div>
<div style="left:756px;top:291px;width:9px;height:9px;border:1px solid #d0d0d0;background:linear-gradient(#f4f4f4,#fff);"></div>
<div style="left:813px;top:289px;width:13px;height:13px;border:1px solid #8c8c8c;background:#fff;"></div>
<div style="left:815px;top:291px;width:9px;height:9px;border:1px solid #d0d0d0;background:linear-gradient(#f4f4f4,#fff);"></div>
<div style="left:887px;top:289px;width:13px;height:13px;border:1px solid #8c8c8c;background:#fff;"></div>
<div style="left:889px;top:291px;width:9px;height:9px;border:1px solid #d0d0d0;background:linear-gradient(#f4f4f4,#fff);"></div>
<div style="left:938px;top:282px;width:158px;height:25px;overflow:hidden">
<span class="t" style="left:0px;top:5.84px;font-size:12px;line-height:16px;color:#111;font-weight:400;text-align:left;">450/750 V</span>
</div>
<div style="left:44px;top:308px;width:24px;height:24px;background:#e3e3e3;box-shadow:inset 0 0 0 1px #fff;"></div>
<div style="left:77px;top:316px;width:9px;height:9px"><svg width="9" height="9" viewBox="0 0 9 9"><rect x="0" y="0" width="9" height="9" fill="url(#pbs)"/><rect x="1" y="1" width="7" height="7" fill="url(#pb)"/><path d="M2.1 4.5 H6.9 M4.5 2.1 V6.9" stroke="#000" stroke-width="1.25"/></svg></div>
<div style="left:98px;top:307px;width:55px;height:25px;overflow:hidden">
<span class="t" style="left:0px;top:5.84px;font-size:12px;line-height:16px;color:#111;font-weight:400;text-align:left;">0600343</span>
</div>
<div style="left:160px;top:307px;width:74px;height:25px;overflow:hidden">
<span class="t" style="left:0px;top:5.84px;font-size:12px;line-height:16px;color:#1b6fd6;font-weight:400;text-align:left;text-decoration:underline;text-underline-offset:4.4px;text-decoration-thickness:1px;">0600343</span>
</div>
<div style="left:278px;top:307px;width:54px;height:25px;overflow:hidden">
<span class="t" style="left:0px;top:5.84px;font-size:12px;line-height:16px;color:#111;font-weight:400;text-align:left;">AMCMK 4x70/21 AN</span>
</div>
<div style="left:342px;top:307px;width:64px;height:25px;overflow:hidden">
<span class="t" style="left:0px;top:5.84px;font-size:12px;line-height:16px;color:#111;font-weight:400;text-align:left;">4x70/21</span>
</div>
<div style="left:416px;top:307px;width:69px;height:25px;overflow:hidden">
<span class="t" style="left:0px;top:5.84px;font-size:12px;line-height:16px;color:#111;font-weight:400;text-align:left;">Prysmian Group</span>
</div>
<div style="left:495px;top:307px;width:68px;height:25px;overflow:hidden">
<span class="t" style="left:0px;top:5.84px;font-size:12px;line-height:16px;color:#111;font-weight:400;text-align:left;">Voimakaapeli</span>
</div>
<div style="left:573px;top:307px;width:68px;height:25px;overflow:hidden">
<span class="t" style="left:0px;top:5.84px;font-size:12px;line-height:16px;color:#111;font-weight:400;text-align:left;">Power cable</span>
</div>
<div style="left:651px;top:307px;width:47px;height:25px;overflow:hidden">
<span class="t" style="left:0px;top:5.84px;font-size:12px;line-height:16px;color:#111;font-weight:400;text-align:left;">35</span>
</div>
<div style="left:708px;top:307px;width:36px;height:25px;overflow:hidden">
<span class="t" style="left:0px;top:5.84px;font-size:12px;line-height:16px;color:#111;font-weight:400;text-align:left;">1600</span>
</div>
<div style="left:754px;top:314px;width:13px;height:13px;border:1px solid #8c8c8c;background:#fff;"></div>
<div style="left:756px;top:316px;width:9px;height:9px;border:1px solid #d0d0d0;background:linear-gradient(#f4f4f4,#fff);"></div>
<div style="left:813px;top:314px;width:13px;height:13px;border:1px solid #8c8c8c;background:#fff;"></div>
<div style="left:815px;top:316px;width:9px;height:9px;border:1px solid #d0d0d0;background:linear-gradient(#f4f4f4,#fff);"></div>
<div style="left:887px;top:314px;width:13px;height:13px;border:1px solid #8c8c8c;background:#fff;"></div>
<div style="left:889px;top:316px;width:9px;height:9px;border:1px solid #d0d0d0;background:linear-gradient(#f4f4f4,#fff);"></div>
<div style="left:938px;top:307px;width:158px;height:25px;overflow:hidden">
<span class="t" style="left:0px;top:5.84px;font-size:12px;line-height:16px;color:#111;font-weight:400;text-align:left;">0,6/1 kV</span>
</div>
<div style="left:44px;top:333px;width:24px;height:24px;background:#e3e3e3;box-shadow:inset 0 0 0 1px #fff;"></div>
<div style="left:77px;top:341px;width:9px;height:9px"><svg width="9" height="9" viewBox="0 0 9 9"><rect x="0" y="0" width="9" height="9" fill="url(#pbs)"/><rect x="1" y="1" width="7" height="7" fill="url(#pb)"/><path d="M2.1 4.5 H6.9 M4.5 2.1 V6.9" stroke="#000" stroke-width="1.25"/></svg></div>
<div style="left:98px;top:332px;width:55px;height:25px;overflow:hidden">
<span class="t" style="left:0px;top:5.84px;font-size:12px;line-height:16px;color:#111;font-weight:400;text-align:left;">0626292</span>
</div>
<div style="left:160px;top:332px;width:74px;height:25px;overflow:hidden">
<span class="t" style="left:0px;top:5.84px;font-size:12px;line-height:16px;color:#1b6fd6;font-weight:400;text-align:left;text-decoration:underline;text-underline-offset:4.4px;text-decoration-thickness:1px;">0626292</span>
</div>
<div style="left:278px;top:332px;width:54px;height:25px;overflow:hidden">
<span class="t" style="left:0px;top:5.84px;font-size:12px;line-height:16px;color:#111;font-weight:400;text-align:left;">AXMK/PE 4x185</span>
</div>
<div style="left:342px;top:332px;width:64px;height:25px;overflow:hidden">
<span class="t" style="left:0px;top:5.84px;font-size:12px;line-height:16px;color:#111;font-weight:400;text-align:left;">4x185 S Power</span>
</div>
<div style="left:416px;top:332px;width:69px;height:25px;overflow:hidden">
<span class="t" style="left:0px;top:5.84px;font-size:12px;line-height:16px;color:#111;font-weight:400;text-align:left;">REKA</span>
</div>
<div style="left:495px;top:332px;width:68px;height:25px;overflow:hidden">
<span class="t" style="left:0px;top:5.84px;font-size:12px;line-height:16px;color:#111;font-weight:400;text-align:left;">Alumiinivoimakaapeli</span>
</div>
<div style="left:573px;top:332px;width:68px;height:25px;overflow:hidden">
<span class="t" style="left:0px;top:5.84px;font-size:12px;line-height:16px;color:#111;font-weight:400;text-align:left;">Aluminium power cable</span>
</div>
<div style="left:651px;top:332px;width:47px;height:25px;overflow:hidden">
<span class="t" style="left:0px;top:5.84px;font-size:12px;line-height:16px;color:#111;font-weight:400;text-align:left;">46</span>
</div>
<div style="left:708px;top:332px;width:36px;height:25px;overflow:hidden">
<span class="t" style="left:0px;top:5.84px;font-size:12px;line-height:16px;color:#111;font-weight:400;text-align:left;">2608</span>
</div>
<div style="left:754px;top:339px;width:13px;height:13px;border:1px solid #8c8c8c;background:#fff;"></div>
<div style="left:756px;top:341px;width:9px;height:9px;border:1px solid #d0d0d0;background:linear-gradient(#f4f4f4,#fff);"></div>
<div style="left:813px;top:339px;width:13px;height:13px;border:1px solid #8c8c8c;background:#fff;"></div>
<div style="left:815px;top:341px;width:9px;height:9px;border:1px solid #d0d0d0;background:linear-gradient(#f4f4f4,#fff);"></div>
<div style="left:887px;top:339px;width:13px;height:13px;border:1px solid #8c8c8c;background:#fff;"></div>
<div style="left:889px;top:341px;width:9px;height:9px;border:1px solid #d0d0d0;background:linear-gradient(#f4f4f4,#fff);"></div>
<div style="left:938px;top:332px;width:158px;height:25px;overflow:hidden">
<span class="t" style="left:0px;top:5.84px;font-size:12px;line-height:16px;color:#111;font-weight:400;text-align:left;">0.6/1 (1.2) kV</span>
</div>
<div style="left:69px;top:232px;width:2000px;height:1px;background:#d0d0d0;"></div>
<div style="left:43px;top:232px;width:26px;height:1px;background:#8a8a8a;"></div>
<div style="left:69px;top:257px;width:2000px;height:1px;background:#d0d0d0;"></div>
<div style="left:43px;top:257px;width:26px;height:1px;background:#8a8a8a;"></div>
<div style="left:69px;top:282px;width:2000px;height:1px;background:#d0d0d0;"></div>
<div style="left:43px;top:282px;width:26px;height:1px;background:#8a8a8a;"></div>
<div style="left:69px;top:307px;width:2000px;height:1px;background:#d0d0d0;"></div>
<div style="left:43px;top:307px;width:26px;height:1px;background:#8a8a8a;"></div>
<div style="left:69px;top:332px;width:2000px;height:1px;background:#d0d0d0;"></div>
<div style="left:43px;top:332px;width:26px;height:1px;background:#8a8a8a;"></div>
<div style="left:69px;top:357px;width:2000px;height:1px;background:#d0d0d0;"></div>
<div style="left:43px;top:357px;width:26px;height:1px;background:#8a8a8a;"></div>
<div style="left:154px;top:207px;width:1px;height:150px;background:#cfcfcf;"></div>
<div style="left:238px;top:207px;width:1px;height:150px;background:#cfcfcf;"></div>
<div style="left:272px;top:207px;width:1px;height:150px;background:#cfcfcf;"></div>
<div style="left:336px;top:207px;width:1px;height:150px;background:#cfcfcf;"></div>
<div style="left:410px;top:207px;width:1px;height:150px;background:#cfcfcf;"></div>
<div style="left:489px;top:207px;width:1px;height:150px;background:#cfcfcf;"></div>
<div style="left:567px;top:207px;width:1px;height:150px;background:#cfcfcf;"></div>
<div style="left:645px;top:207px;width:1px;height:150px;background:#cfcfcf;"></div>
<div style="left:702px;top:207px;width:1px;height:150px;background:#cfcfcf;"></div>
<div style="left:748px;top:207px;width:1px;height:150px;background:#cfcfcf;"></div>
<div style="left:807px;top:207px;width:1px;height:150px;background:#cfcfcf;"></div>
<div style="left:881px;top:207px;width:1px;height:150px;background:#cfcfcf;"></div>
<div style="left:932px;top:207px;width:1px;height:150px;background:#cfcfcf;"></div>
<div style="left:68px;top:207px;width:1px;height:150px;background:#8a8a8a;"></div>
<div style="left:95px;top:207px;width:1px;height:150px;background:#767676;"></div>
<div style="left:96px;top:207px;width:2px;height:150px;background:linear-gradient(90deg,rgba(0,0,0,0.22),rgba(0,0,0,0));"></div>
<div style="left:94px;top:181px;width:1px;height:176px;background:#fff;"></div>
<div style="left:44px;top:358px;width:2000px;height:16px;background:#e4e4e4;border-top:1px solid #6a6a6a;"></div>
<span class="t" style="left:54px;top:358.84px;font-size:12px;line-height:16px;color:#111;font-weight:400;text-align:left;"><b>Quantity:</b> 6</span>
<div style="left:44px;top:374px;width:2000px;height:1px;background:#4a4a4a;"></div>
</div>
</div>
<div style="left:12px;top:368px;width:971px;height:17px;background:#e6e6e6;border-top:1px solid #7a7a7a;"></div>
<span class="t" style="left:22px;top:369.34px;font-size:12px;line-height:16px;color:#111;font-weight:400;text-align:left;"><b>Quantity:</b> 1</span>
<div style="left:167px;top:369px;width:816px;height:16px;background:#f0f0f0;"></div>
<div style="left:138px;top:373px;width:10px;height:8px"><svg width="10" height="8" viewBox="0 0 10 8"><path d="M0 4 L4.5 0.5 V7.5 Z M4 4 L8.5 0.5 V7.5 Z" fill="#444"/></svg></div>
<div style="left:152px;top:369px;width:15px;height:16px;background:#f0f0f0;"></div>
<div style="left:156px;top:373px;width:6px;height:8px"><svg width="6" height="8"><path d="M0 4 L5 0 V8 Z" fill="#111"/></svg></div>
<div style="left:167px;top:369px;width:490px;height:15px;border:1px solid #6e6e6e;border-radius:2px;background:linear-gradient(#fff 0%,#ececec 40%,#c4c4c4 50%,#bcbcbc 100%);"></div>
<div style="left:409px;top:373px;width:6px;height:8px"><svg width="6" height="8"><path d="M0.5 0 V8 M2.5 0 V8 M4.5 0 V8" stroke="#222" stroke-width="1"/></svg></div>
<div style="left:958px;top:373px;width:6px;height:8px"><svg width="6" height="8"><path d="M0 0 L5 4 L0 8 Z" fill="#111"/></svg></div>
<div style="left:967px;top:369px;width:16px;height:16px;background:#e4e4e4;"></div>
<div style="left:970px;top:373px;width:10px;height:8px"><svg width="10" height="8" viewBox="0 0 10 8"><path d="M10 4 L5.5 0.5 V7.5 Z M6 4 L1.5 0.5 V7.5 Z" fill="#444"/></svg></div>
<div style="left:982px;top:122px;width:1px;height:246px;background:#7a7a7a;"></div>
<div style="left:983px;top:122px;width:15px;height:246px;background:linear-gradient(90deg,#e2e2e2,#f2f2f2 40%,#f0f0f0);"></div>
<div style="left:983px;top:122px;width:15px;height:15px;background:#e4e4e4;box-shadow:inset 1px 1px 0 #fafafa;"></div>
<div style="left:986px;top:124px;width:8px;height:9px"><svg width="8" height="9" viewBox="0 0 8 9"><path d="M4 0 L8 4.2 L6.5 4.2 L7.5 5.8 L5.5 5.8 L5.5 8.5 L2.5 8.5 L2.5 5.8 L0.5 5.8 L1.5 4.2 L0 4.2 Z" fill="#333"/></svg></div>
<div style="left:987px;top:143px;width:7px;height:4px"><svg width="7" height="4"><path d="M3.5 0 L7 4 H0 Z" fill="#000"/></svg></div>
<div style="left:983px;top:152px;width:15px;height:173px;border-top:1px solid #6e6e6e;border-bottom:1px solid #6e6e6e;border-right:1px solid #6e6e6e;background:#fff;"></div>
<div style="left:984px;top:154px;width:12px;height:169px;background:linear-gradient(90deg,#fdfdfd 0%,#ececec 50%,#c2c2c2 50%,#b8b8b8 100%);"></div>
<div style="left:986px;top:236px;width:9px;height:4px"><svg width="9" height="4"><path d="M0 0.5 H9 M0 2.5 H9" stroke="#111"/></svg></div>
<div style="left:987px;top:343px;width:7px;height:4px"><svg width="7" height="4"><path d="M0 0 H7 L3.5 4 Z" fill="#000"/></svg></div>
<div style="left:983px;top:353px;width:15px;height:15px;background:#e4e4e4;"></div>
<div style="left:986px;top:357px;width:8px;height:9px"><svg width="8" height="9" viewBox="0 0 8 9"><path d="M4 9 L8 4.8 L6.5 4.8 L7.5 3.2 L5.5 3.2 L5.5 0.5 L2.5 0.5 L2.5 3.2 L0.5 3.2 L1.5 4.8 L0 4.8 Z" fill="#333"/></svg></div>
<div style="left:983px;top:368px;width:15px;height:17px;background:#f0f0f0;"></div>
<div style="left:11px;top:394px;width:128px;height:22px;border:1px solid #7c7c7c;border-radius:2px;background:linear-gradient(#f6f6f6 0%,#e6e6e6 45%,#b4b4b4 50%,#c9c9c9 88%,#ffffff 92%,#ffffff 100%);box-shadow:inset 1px 0 0 #fff,inset -1px 0 0 #fff,inset 0 1px 0 #fff;"></div>
<div style="left:11px;top:394px;width:128px;height:22px;overflow:hidden">
<span class="t" style="left:0px;top:3.34px;font-size:12px;line-height:16px;color:#1a1a1a;font-weight:400;text-align:center;width:128px;overflow:hidden;">New...</span>
</div>
<div style="left:144px;top:394px;width:128px;height:22px;border:1px solid #7c7c7c;border-radius:2px;background:linear-gradient(#f6f6f6 0%,#e6e6e6 45%,#b4b4b4 50%,#c9c9c9 88%,#ffffff 92%,#ffffff 100%);box-shadow:inset 1px 0 0 #fff,inset -1px 0 0 #fff,inset 0 1px 0 #fff;"></div>
<div style="left:144px;top:394px;width:128px;height:22px;overflow:hidden">
<span class="t" style="left:0px;top:3.34px;font-size:12px;line-height:16px;color:#1a1a1a;font-weight:400;text-align:center;width:128px;overflow:hidden;">Edit...</span>
</div>
<div style="left:278px;top:394px;width:128px;height:22px;border:1px solid #7c7c7c;border-radius:2px;background:linear-gradient(#f6f6f6 0%,#e6e6e6 45%,#b4b4b4 50%,#c9c9c9 88%,#ffffff 92%,#ffffff 100%);box-shadow:inset 1px 0 0 #fff,inset -1px 0 0 #fff,inset 0 1px 0 #fff;"></div>
<div style="left:278px;top:394px;width:128px;height:22px;overflow:hidden">
<span class="t" style="left:0px;top:3.34px;font-size:12px;line-height:16px;color:#1a1a1a;font-weight:400;text-align:center;width:128px;overflow:hidden;">Copy to shared...</span>
</div>
<div style="left:411px;top:394px;width:128px;height:22px;border:1px solid #7c7c7c;border-radius:2px;background:linear-gradient(#f6f6f6 0%,#e6e6e6 45%,#b4b4b4 50%,#c9c9c9 88%,#ffffff 92%,#ffffff 100%);box-shadow:inset 1px 0 0 #fff,inset -1px 0 0 #fff,inset 0 1px 0 #fff;"></div>
<div style="left:411px;top:394px;width:128px;height:22px;overflow:hidden">
<span class="t" style="left:0px;top:3.34px;font-size:12px;line-height:16px;color:#1a1a1a;font-weight:400;text-align:center;width:128px;overflow:hidden;">Remove</span>
</div>
<div style="left:544px;top:394px;width:128px;height:22px;border:1px solid #7c7c7c;border-radius:2px;background:linear-gradient(#f6f6f6 0%,#e6e6e6 45%,#b4b4b4 50%,#c9c9c9 88%,#ffffff 92%,#ffffff 100%);box-shadow:inset 1px 0 0 #fff,inset -1px 0 0 #fff,inset 0 1px 0 #fff;"></div>
<div style="left:544px;top:394px;width:128px;height:22px;overflow:hidden">
<span class="t" style="left:0px;top:3.34px;font-size:12px;line-height:16px;color:#1a1a1a;font-weight:400;text-align:center;width:128px;overflow:hidden;">Add to project</span>
</div>
<div style="left:677px;top:394px;width:128px;height:22px;border:1px solid #7c7c7c;border-radius:2px;background:linear-gradient(#f6f6f6 0%,#e6e6e6 45%,#b4b4b4 50%,#c9c9c9 88%,#ffffff 92%,#ffffff 100%);box-shadow:inset 1px 0 0 #fff,inset -1px 0 0 #fff,inset 0 1px 0 #fff;"></div>
<div style="left:677px;top:394px;width:128px;height:22px;overflow:hidden">
<span class="t" style="left:0px;top:3.34px;font-size:12px;line-height:16px;color:#1a1a1a;font-weight:400;text-align:center;width:128px;overflow:hidden;">Update selected</span>
</div>
<div style="left:811px;top:394px;width:128px;height:22px;border:1px solid #7c7c7c;border-radius:2px;background:linear-gradient(#f6f6f6 0%,#e6e6e6 45%,#b4b4b4 50%,#c9c9c9 88%,#ffffff 92%,#ffffff 100%);box-shadow:inset 1px 0 0 #fff,inset -1px 0 0 #fff,inset 0 1px 0 #fff;"></div>
<div style="left:811px;top:394px;width:128px;height:22px;overflow:hidden">
<span class="t" style="left:0px;top:3.34px;font-size:12px;line-height:16px;color:#1a1a1a;font-weight:400;text-align:center;width:128px;overflow:hidden;">Import...</span>
</div>
<div style="left:11px;top:420px;width:987px;height:7px;background:#efefef;"></div>
<div style="left:12px;top:427px;width:986px;height:21px;background:#b2c5de;border-radius:3px;"></div>
<div style="left:12px;top:427px;width:21px;height:21px"><svg width="21" height="21" viewBox="0 0 21 21"><circle cx="10.5" cy="10.2" r="9" fill="#fff" stroke="#2c2c2c" stroke-width="1.1"/><path d="M7 8.5 L10.5 12 L14 8.5" fill="none" stroke="#333" stroke-width="1.8"/></svg></div>
<span class="t" style="left:36.5px;top:430.62px;font-size:11.2px;line-height:15px;color:#111;font-weight:400;text-align:left;">Packages</span>
<div style="left:425px;top:477px;width:574px;height:1px;background:#9a9a9a;"></div>
<div style="left:199px;top:459px;width:227px;height:19px;border:1px solid #858585;border-bottom:none;border-radius:3px 3px 0 0;background:linear-gradient(#f8f8f8,#dcdcdc);box-shadow:inset 1px 1px 0 #fff;"></div>
<span class="t" style="left:205px;top:459.84px;font-size:12px;line-height:16px;color:#111;font-weight:400;text-align:left;">Project default cable package definitions</span>
<div style="left:13px;top:457px;width:186px;height:21px;border:1px solid #858585;border-bottom:none;border-radius:3px 3px 0 0;background:#fff;"></div>
<span class="t" style="left:19px;top:459.84px;font-size:12px;line-height:16px;color:#f7901e;font-weight:400;text-align:left;">Project cable package definitions</span>
<div style="left:11px;top:479px;width:988px;height:271px;border:1px solid #6b6b6b;background:#fff;"></div>
<div style="left:0px;top:0px;width:998px;height:793px;overflow:hidden">
<div style="left:12px;top:480px;width:986px;height:1px;background:#f4f7fb;"></div>
<div style="left:12px;top:481px;width:986px;height:28px;background:linear-gradient(#bcbcbc,#dedede);"></div>
<div style="left:12px;top:480px;width:1px;height:29px;background:#f4f7fb;"></div>
<span class="t" style="left:21px;top:490.17px;font-size:9.6px;line-height:12px;color:#1a1a1a;font-weight:400;text-align:left;">Drag a column header and drop it here to group by that column</span>
<div style="left:12px;top:509px;width:986px;height:1px;background:#5c5c5c;"></div>
<div style="left:12px;top:510px;width:24px;height:26px;background:linear-gradient(#8e8e8e 0%,#5e5e5e 42%,#111 42%,#1c1c1c 52%,#4e4e4e 100%);box-shadow:inset 0 0 0 1px #3a3a3a;"></div>
<div style="left:36px;top:510px;width:1px;height:26px;background:#8a8a8a;"></div>
<div style="left:37px;top:510px;width:25px;height:26px;background:linear-gradient(#8e8e8e 0%,#5e5e5e 42%,#111 42%,#1c1c1c 52%,#4e4e4e 100%);box-shadow:inset 0 0 0 1px #3a3a3a;"></div>
<div style="left:62px;top:510px;width:1px;height:26px;background:#fff;"></div>
<div style="left:63px;top:510px;width:149px;height:26px;background:linear-gradient(#8e8e8e 0%,#5e5e5e 42%,#111 42%,#1c1c1c 52%,#4e4e4e 100%);box-shadow:inset 0 0 0 1px #3a3a3a;"></div>
<div style="left:212px;top:510px;width:1px;height:26px;background:#8a8a8a;"></div>
<div style="left:67px;top:510px;width:124px;height:26px;overflow:hidden">
<span class="t" style="left:0px;top:6.34px;font-size:12px;line-height:16px;color:#fff;font-weight:400;text-align:left;">Description</span>
</div>
<div style="left:197px;top:517px;width:13px;height:13px"><svg width="13" height="13" viewBox="0 0 13 13"><path d="M1.2 0.8 L10.8 0.8 L8.2 4.2 L8.2 12.2 L4.3 8.6 L4.3 4.2 Z" fill="url(#fg)"/><path d="M0.2 1.1 L3.9 4.9 M11.8 1.1 L8.1 4.9 M3.9 9.1 L7.9 13" fill="none" stroke="#000" stroke-width="1.05"/></svg></div>
<div style="left:213px;top:510px;width:114px;height:26px;background:linear-gradient(#8e8e8e 0%,#5e5e5e 42%,#111 42%,#1c1c1c 52%,#4e4e4e 100%);box-shadow:inset 0 0 0 1px #3a3a3a;"></div>
<div style="left:327px;top:510px;width:1px;height:26px;background:#8a8a8a;"></div>
<div style="left:217px;top:510px;width:89px;height:26px;overflow:hidden">
<span class="t" style="left:0px;top:6.34px;font-size:12px;line-height:16px;color:#fff;font-weight:400;text-align:left;">Product information</span>
</div>
<div style="left:312px;top:517px;width:13px;height:13px"><svg width="13" height="13" viewBox="0 0 13 13"><path d="M1.2 0.8 L10.8 0.8 L8.2 4.2 L8.2 12.2 L4.3 8.6 L4.3 4.2 Z" fill="url(#fg)"/><path d="M0.2 1.1 L3.9 4.9 M11.8 1.1 L8.1 4.9 M3.9 9.1 L7.9 13" fill="none" stroke="#000" stroke-width="1.05"/></svg></div>
<div style="left:328px;top:510px;width:636px;height:26px;background:linear-gradient(#8e8e8e 0%,#5e5e5e 42%,#111 42%,#1c1c1c 52%,#4e4e4e 100%);box-shadow:inset 0 0 0 1px #3a3a3a;"></div>
<div style="left:964px;top:510px;width:1px;height:26px;background:#8a8a8a;"></div>
<div style="left:332px;top:510px;width:611px;height:26px;overflow:hidden">
<span class="t" style="left:0px;top:6.34px;font-size:12px;line-height:16px;color:#fff;font-weight:400;text-align:left;">Type</span>
</div>
<div style="left:949px;top:517px;width:13px;height:13px"><svg width="13" height="13" viewBox="0 0 13 13"><path d="M1.2 0.8 L10.8 0.8 L8.2 4.2 L8.2 12.2 L4.3 8.6 L4.3 4.2 Z" fill="url(#fg)"/><path d="M0.2 1.1 L3.9 4.9 M11.8 1.1 L8.1 4.9 M3.9 9.1 L7.9 13" fill="none" stroke="#000" stroke-width="1.05"/></svg></div>
<div style="left:965px;top:510px;width:135px;height:26px;background:linear-gradient(#8e8e8e 0%,#5e5e5e 42%,#111 42%,#1c1c1c 52%,#4e4e4e 100%);box-shadow:inset 0 0 0 1px #3a3a3a;"></div>
<div style="left:1100px;top:510px;width:1px;height:26px;background:#8a8a8a;"></div>
<div style="left:969px;top:510px;width:130px;height:26px;overflow:hidden">
<span class="t" style="left:0px;top:6.34px;font-size:12px;line-height:16px;color:#fff;font-weight:400;text-align:left;">Type</span>
</div>
</div>
<div style="left:0px;top:0px;width:998px;height:793px;overflow:hidden">
<div style="left:12px;top:536px;width:24px;height:158px;background:#e3e3e3;box-shadow:inset 1px 1px 0 #fff;"></div>
<div style="left:36px;top:536px;width:1px;height:158px;background:#8a8a8a;"></div>
<div style="left:35px;top:536px;width:1px;height:158px;background:#fff;"></div>
<div style="left:36px;top:536px;width:1px;height:158px;background:#7a7a7a;"></div>
<div style="left:37px;top:536px;width:26px;height:26px;background:#fff;"></div>
<div style="left:45px;top:545px;width:9px;height:9px"><svg width="9" height="9" viewBox="0 0 9 9"><rect x="0" y="0" width="9" height="9" fill="url(#pbs)"/><rect x="1" y="1" width="7" height="7" fill="url(#pb)"/><path d="M2.1 4.5 H6.9" stroke="#000" stroke-width="1.4"/></svg></div>
<div style="left:62px;top:510px;width:1px;height:52px;background:#fff;"></div>
<div style="left:63px;top:536px;width:935px;height:25px;background:#eeeeee;"></div>
<div style="left:63px;top:536px;width:1px;height:25px;background:#a8a8a8;"></div>
<div style="left:63px;top:561px;width:935px;height:1px;background:#fff;"></div>
<div style="left:212px;top:536px;width:1px;height:25px;background:#cfcfcf;"></div>
<div style="left:327px;top:536px;width:1px;height:25px;background:#cfcfcf;"></div>
<div style="left:964px;top:536px;width:1px;height:25px;background:#cfcfcf;"></div>
<span class="t" style="left:333px;top:542.48px;font-size:11.6px;line-height:15px;color:#111;font-weight:400;text-align:left;">3x(AXMK/PE 4x185)</span>
<span class="t" style="left:969px;top:541.84px;font-size:12px;line-height:16px;color:#111;font-weight:400;text-align:left;">3x(4x185)</span>
<div style="left:37px;top:562px;width:961px;height:132px;background:#bdbdbd;border-top:1px solid #8c8c8c;"></div>
<div style="left:0px;top:0px;width:998px;height:800px;overflow:hidden">
<div style="left:43px;top:569px;width:2000px;height:102px;background:#fff;"></div>
<div style="left:43px;top:569px;width:1px;height:119px;background:#7a7a7a;"></div>
<div style="left:44px;top:569px;width:24px;height:26px;background:linear-gradient(#8e8e8e 0%,#5e5e5e 42%,#111 42%,#1c1c1c 52%,#4e4e4e 100%);box-shadow:inset 0 0 0 1px #3a3a3a;"></div>
<div style="left:68px;top:569px;width:1px;height:26px;background:#8a8a8a;"></div>
<div style="left:69px;top:569px;width:25px;height:26px;background:linear-gradient(#8e8e8e 0%,#5e5e5e 42%,#111 42%,#1c1c1c 52%,#4e4e4e 100%);box-shadow:inset 0 0 0 1px #3a3a3a;"></div>
<div style="left:95px;top:569px;width:59px;height:26px;background:linear-gradient(#8e8e8e 0%,#5e5e5e 42%,#111 42%,#1c1c1c 52%,#4e4e4e 100%);box-shadow:inset 0 0 0 1px #3a3a3a;"></div>
<div style="left:154px;top:569px;width:1px;height:26px;background:#8a8a8a;"></div>
<div style="left:99px;top:569px;width:34px;height:26px;overflow:hidden">
<span class="t" style="left:0px;top:5.84px;font-size:12px;line-height:16px;color:#fff;font-weight:400;text-align:left;">Item code</span>
</div>
<div style="left:139px;top:576px;width:13px;height:13px"><svg width="13" height="13" viewBox="0 0 13 13"><path d="M1.2 0.8 L10.8 0.8 L8.2 4.2 L8.2 12.2 L4.3 8.6 L4.3 4.2 Z" fill="url(#fg)"/><path d="M0.2 1.1 L3.9 4.9 M11.8 1.1 L8.1 4.9 M3.9 9.1 L7.9 13" fill="none" stroke="#000" stroke-width="1.05"/></svg></div>
<div style="left:155px;top:569px;width:83px;height:26px;background:linear-gradient(#8e8e8e 0%,#5e5e5e 42%,#111 42%,#1c1c1c 52%,#4e4e4e 100%);box-shadow:inset 0 0 0 1px #3a3a3a;"></div>
<div style="left:238px;top:569px;width:1px;height:26px;background:#8a8a8a;"></div>
<div style="left:159px;top:569px;width:58px;height:26px;overflow:hidden">
<span class="t" style="left:0px;top:5.84px;font-size:12px;line-height:16px;color:#fff;font-weight:400;text-align:left;">Electrical code</span>
</div>
<div style="left:223px;top:576px;width:13px;height:13px"><svg width="13" height="13" viewBox="0 0 13 13"><path d="M1.2 0.8 L10.8 0.8 L8.2 4.2 L8.2 12.2 L4.3 8.6 L4.3 4.2 Z" fill="url(#fg)"/><path d="M0.2 1.1 L3.9 4.9 M11.8 1.1 L8.1 4.9 M3.9 9.1 L7.9 13" fill="none" stroke="#000" stroke-width="1.05"/></svg></div>
<div style="left:239px;top:569px;width:33px;height:26px;background:linear-gradient(#8e8e8e 0%,#5e5e5e 42%,#111 42%,#1c1c1c 52%,#4e4e4e 100%);box-shadow:inset 0 0 0 1px #3a3a3a;"></div>
<div style="left:272px;top:569px;width:1px;height:26px;background:#8a8a8a;"></div>
<div style="left:243px;top:569px;width:10px;height:26px;overflow:hidden">
<span class="t" style="left:0px;top:5.84px;font-size:12px;line-height:16px;color:#fff;font-weight:400;text-align:left;">G</span>
</div>
<div style="left:257px;top:576px;width:13px;height:13px"><svg width="13" height="13" viewBox="0 0 13 13"><path d="M1.2 0.8 L10.8 0.8 L8.2 4.2 L8.2 12.2 L4.3 8.6 L4.3 4.2 Z" fill="url(#fg)"/><path d="M0.2 1.1 L3.9 4.9 M11.8 1.1 L8.1 4.9 M3.9 9.1 L7.9 13" fill="none" stroke="#000" stroke-width="1.05"/></svg></div>
<div style="left:273px;top:569px;width:63px;height:26px;background:linear-gradient(#8e8e8e 0%,#5e5e5e 42%,#111 42%,#1c1c1c 52%,#4e4e4e 100%);box-shadow:inset 0 0 0 1px #3a3a3a;"></div>
<div style="left:336px;top:569px;width:1px;height:26px;background:#8a8a8a;"></div>
<div style="left:277px;top:569px;width:38px;height:26px;overflow:hidden">
<span class="t" style="left:0px;top:5.84px;font-size:12px;line-height:16px;color:#fff;font-weight:400;text-align:left;">Cable type</span>
</div>
<div style="left:321px;top:576px;width:13px;height:13px"><svg width="13" height="13" viewBox="0 0 13 13"><path d="M1.2 0.8 L10.8 0.8 L8.2 4.2 L8.2 12.2 L4.3 8.6 L4.3 4.2 Z" fill="url(#fg)"/><path d="M0.2 1.1 L3.9 4.9 M11.8 1.1 L8.1 4.9 M3.9 9.1 L7.9 13" fill="none" stroke="#000" stroke-width="1.05"/></svg></div>
<div style="left:337px;top:569px;width:73px;height:26px;background:linear-gradient(#8e8e8e 0%,#5e5e5e 42%,#111 42%,#1c1c1c 52%,#4e4e4e 100%);box-shadow:inset 0 0 0 1px #3a3a3a;"></div>
<div style="left:410px;top:569px;width:1px;height:26px;background:#8a8a8a;"></div>
<div style="left:341px;top:569px;width:48px;height:26px;overflow:hidden">
<span class="t" style="left:0px;top:5.84px;font-size:12px;line-height:16px;color:#fff;font-weight:400;text-align:left;">Cable type</span>
</div>
<div style="left:395px;top:576px;width:13px;height:13px"><svg width="13" height="13" viewBox="0 0 13 13"><path d="M1.2 0.8 L10.8 0.8 L8.2 4.2 L8.2 12.2 L4.3 8.6 L4.3 4.2 Z" fill="url(#fg)"/><path d="M0.2 1.1 L3.9 4.9 M11.8 1.1 L8.1 4.9 M3.9 9.1 L7.9 13" fill="none" stroke="#000" stroke-width="1.05"/></svg></div>
<div style="left:411px;top:569px;width:78px;height:26px;background:linear-gradient(#8e8e8e 0%,#5e5e5e 42%,#111 42%,#1c1c1c 52%,#4e4e4e 100%);box-shadow:inset 0 0 0 1px #3a3a3a;"></div>
<div style="left:489px;top:569px;width:1px;height:26px;background:#8a8a8a;"></div>
<div style="left:415px;top:569px;width:53px;height:26px;overflow:hidden">
<span class="t" style="left:0px;top:5.84px;font-size:12px;line-height:16px;color:#fff;font-weight:400;text-align:left;">Manufacturer</span>
</div>
<div style="left:474px;top:576px;width:13px;height:13px"><svg width="13" height="13" viewBox="0 0 13 13"><path d="M1.2 0.8 L10.8 0.8 L8.2 4.2 L8.2 12.2 L4.3 8.6 L4.3 4.2 Z" fill="url(#fg)"/><path d="M0.2 1.1 L3.9 4.9 M11.8 1.1 L8.1 4.9 M3.9 9.1 L7.9 13" fill="none" stroke="#000" stroke-width="1.05"/></svg></div>
<div style="left:490px;top:569px;width:77px;height:26px;background:linear-gradient(#8e8e8e 0%,#5e5e5e 42%,#111 42%,#1c1c1c 52%,#4e4e4e 100%);box-shadow:inset 0 0 0 1px #3a3a3a;"></div>
<div style="left:567px;top:569px;width:1px;height:26px;background:#8a8a8a;"></div>
<div style="left:494px;top:569px;width:52px;height:26px;overflow:hidden">
<span class="t" style="left:0px;top:5.84px;font-size:12px;line-height:16px;color:#fff;font-weight:400;text-align:left;">Class, Finnish</span>
</div>
<div style="left:552px;top:576px;width:13px;height:13px"><svg width="13" height="13" viewBox="0 0 13 13"><path d="M1.2 0.8 L10.8 0.8 L8.2 4.2 L8.2 12.2 L4.3 8.6 L4.3 4.2 Z" fill="url(#fg)"/><path d="M0.2 1.1 L3.9 4.9 M11.8 1.1 L8.1 4.9 M3.9 9.1 L7.9 13" fill="none" stroke="#000" stroke-width="1.05"/></svg></div>
<div style="left:568px;top:569px;width:77px;height:26px;background:linear-gradient(#8e8e8e 0%,#5e5e5e 42%,#111 42%,#1c1c1c 52%,#4e4e4e 100%);box-shadow:inset 0 0 0 1px #3a3a3a;"></div>
<div style="left:645px;top:569px;width:1px;height:26px;background:#8a8a8a;"></div>
<div style="left:572px;top:569px;width:52px;height:26px;overflow:hidden">
<span class="t" style="left:0px;top:5.84px;font-size:12px;line-height:16px;color:#fff;font-weight:400;text-align:left;">Class, English</span>
</div>
<div style="left:630px;top:576px;width:13px;height:13px"><svg width="13" height="13" viewBox="0 0 13 13"><path d="M1.2 0.8 L10.8 0.8 L8.2 4.2 L8.2 12.2 L4.3 8.6 L4.3 4.2 Z" fill="url(#fg)"/><path d="M0.2 1.1 L3.9 4.9 M11.8 1.1 L8.1 4.9 M3.9 9.1 L7.9 13" fill="none" stroke="#000" stroke-width="1.05"/></svg></div>
<div style="left:646px;top:569px;width:56px;height:26px;background:linear-gradient(#8e8e8e 0%,#5e5e5e 42%,#111 42%,#1c1c1c 52%,#4e4e4e 100%);box-shadow:inset 0 0 0 1px #3a3a3a;"></div>
<div style="left:702px;top:569px;width:1px;height:26px;background:#8a8a8a;"></div>
<div style="left:650px;top:569px;width:31px;height:26px;overflow:hidden">
<span class="t" style="left:0px;top:5.84px;font-size:12px;line-height:16px;color:#fff;font-weight:400;text-align:left;">Diameter</span>
</div>
<div style="left:687px;top:576px;width:13px;height:13px"><svg width="13" height="13" viewBox="0 0 13 13"><path d="M1.2 0.8 L10.8 0.8 L8.2 4.2 L8.2 12.2 L4.3 8.6 L4.3 4.2 Z" fill="url(#fg)"/><path d="M0.2 1.1 L3.9 4.9 M11.8 1.1 L8.1 4.9 M3.9 9.1 L7.9 13" fill="none" stroke="#000" stroke-width="1.05"/></svg></div>
<div style="left:703px;top:569px;width:45px;height:26px;background:linear-gradient(#8e8e8e 0%,#5e5e5e 42%,#111 42%,#1c1c1c 52%,#4e4e4e 100%);box-shadow:inset 0 0 0 1px #3a3a3a;"></div>
<div style="left:748px;top:569px;width:1px;height:26px;background:#8a8a8a;"></div>
<div style="left:707px;top:569px;width:20px;height:26px;overflow:hidden">
<span class="t" style="left:0px;top:5.84px;font-size:12px;line-height:16px;color:#fff;font-weight:400;text-align:left;">Weight</span>
</div>
<div style="left:733px;top:576px;width:13px;height:13px"><svg width="13" height="13" viewBox="0 0 13 13"><path d="M1.2 0.8 L10.8 0.8 L8.2 4.2 L8.2 12.2 L4.3 8.6 L4.3 4.2 Z" fill="url(#fg)"/><path d="M0.2 1.1 L3.9 4.9 M11.8 1.1 L8.1 4.9 M3.9 9.1 L7.9 13" fill="none" stroke="#000" stroke-width="1.05"/></svg></div>
<div style="left:749px;top:569px;width:58px;height:26px;background:linear-gradient(#8e8e8e 0%,#5e5e5e 42%,#111 42%,#1c1c1c 52%,#4e4e4e 100%);box-shadow:inset 0 0 0 1px #3a3a3a;"></div>
<div style="left:807px;top:569px;width:1px;height:26px;background:#8a8a8a;"></div>
<div style="left:753px;top:569px;width:33px;height:26px;overflow:hidden">
<span class="t" style="left:0px;top:5.84px;font-size:12px;line-height:16px;color:#fff;font-weight:400;text-align:left;">Pair cable</span>
</div>
<div style="left:792px;top:576px;width:13px;height:13px"><svg width="13" height="13" viewBox="0 0 13 13"><path d="M1.2 0.8 L10.8 0.8 L8.2 4.2 L8.2 12.2 L4.3 8.6 L4.3 4.2 Z" fill="url(#fg)"/><path d="M0.2 1.1 L3.9 4.9 M11.8 1.1 L8.1 4.9 M3.9 9.1 L7.9 13" fill="none" stroke="#000" stroke-width="1.05"/></svg></div>
<div style="left:808px;top:569px;width:73px;height:26px;background:linear-gradient(#8e8e8e 0%,#5e5e5e 42%,#111 42%,#1c1c1c 52%,#4e4e4e 100%);box-shadow:inset 0 0 0 1px #3a3a3a;"></div>
<div style="left:881px;top:569px;width:1px;height:26px;background:#8a8a8a;"></div>
<div style="left:812px;top:569px;width:48px;height:26px;overflow:hidden">
<span class="t" style="left:0px;top:5.84px;font-size:12px;line-height:16px;color:#fff;font-weight:400;text-align:left;">Generate</span>
</div>
<div style="left:866px;top:576px;width:13px;height:13px"><svg width="13" height="13" viewBox="0 0 13 13"><path d="M1.2 0.8 L10.8 0.8 L8.2 4.2 L8.2 12.2 L4.3 8.6 L4.3 4.2 Z" fill="url(#fg)"/><path d="M0.2 1.1 L3.9 4.9 M11.8 1.1 L8.1 4.9 M3.9 9.1 L7.9 13" fill="none" stroke="#000" stroke-width="1.05"/></svg></div>
<div style="left:882px;top:569px;width:50px;height:26px;background:linear-gradient(#8e8e8e 0%,#5e5e5e 42%,#111 42%,#1c1c1c 52%,#4e4e4e 100%);box-shadow:inset 0 0 0 1px #3a3a3a;"></div>
<div style="left:932px;top:569px;width:1px;height:26px;background:#8a8a8a;"></div>
<div style="left:886px;top:569px;width:25px;height:26px;overflow:hidden">
<span class="t" style="left:0px;top:5.84px;font-size:12px;line-height:16px;color:#fff;font-weight:400;text-align:left;">Wire</span>
</div>
<div style="left:917px;top:576px;width:13px;height:13px"><svg width="13" height="13" viewBox="0 0 13 13"><path d="M1.2 0.8 L10.8 0.8 L8.2 4.2 L8.2 12.2 L4.3 8.6 L4.3 4.2 Z" fill="url(#fg)"/><path d="M0.2 1.1 L3.9 4.9 M11.8 1.1 L8.1 4.9 M3.9 9.1 L7.9 13" fill="none" stroke="#000" stroke-width="1.05"/></svg></div>
<div style="left:933px;top:569px;width:167px;height:26px;background:linear-gradient(#8e8e8e 0%,#5e5e5e 42%,#111 42%,#1c1c1c 52%,#4e4e4e 100%);box-shadow:inset 0 0 0 1px #3a3a3a;"></div>
<div style="left:1100px;top:569px;width:1px;height:26px;background:#8a8a8a;"></div>
<div style="left:937px;top:569px;width:142px;height:26px;overflow:hidden">
<span class="t" style="left:0px;top:5.84px;font-size:12px;line-height:16px;color:#fff;font-weight:400;text-align:left;">Specification</span>
</div>
<div style="left:1085px;top:576px;width:13px;height:13px"><svg width="13" height="13" viewBox="0 0 13 13"><path d="M1.2 0.8 L10.8 0.8 L8.2 4.2 L8.2 12.2 L4.3 8.6 L4.3 4.2 Z" fill="url(#fg)"/><path d="M0.2 1.1 L3.9 4.9 M11.8 1.1 L8.1 4.9 M3.9 9.1 L7.9 13" fill="none" stroke="#000" stroke-width="1.05"/></svg></div>
<div style="left:95px;top:595px;width:2000px;height:25px;background:#efefef;border-top:1px solid #fff;box-shadow:inset 0 1px 0 #cfcfcf,inset 0 2px 0 #fff,inset 0 -1px 0 #fff,inset 0 -2px 0 #cfcfcf,inset 0 -3px 0 #fff;"></div>
<div style="left:44px;top:595px;width:24px;height:25px;background:#e3e3e3;box-shadow:inset 0 0 0 1px #fff;"></div>
<div style="left:52px;top:603px;width:8px;height:10px"><svg width="8" height="10" viewBox="0 0 8 10"><path d="M1.2 1 L6.2 5 L1.2 9" fill="none" stroke="#8c8c8c" stroke-width="1.4"/></svg></div>
<div style="left:70px;top:597px;width:26px;height:22px;background:#eeeeee;border:1px solid #d0d0d0;border-radius:2px;box-shadow:inset 1px 1px 0 #fafafa;"></div>
<div style="left:77px;top:604px;width:9px;height:9px"><svg width="9" height="9" viewBox="0 0 9 9"><rect x="0" y="0" width="9" height="9" fill="url(#pbs)"/><rect x="1" y="1" width="7" height="7" fill="url(#pb)"/><path d="M2.1 4.5 H6.9 M4.5 2.1 V6.9" stroke="#000" stroke-width="1.25"/></svg></div>
<div style="left:98px;top:595px;width:55px;height:25px;overflow:hidden">
<span class="t" style="left:0px;top:5.84px;font-size:12px;line-height:16px;color:#111;font-weight:400;text-align:left;">0626292</span>
</div>
<div style="left:160px;top:595px;width:74px;height:25px;overflow:hidden">
<span class="t" style="left:0px;top:5.84px;font-size:12px;line-height:16px;color:#1b6fd6;font-weight:400;text-align:left;text-decoration:underline;text-underline-offset:4.4px;text-decoration-thickness:1px;">0626292</span>
</div>
<div style="left:278px;top:595px;width:54px;height:25px;overflow:hidden">
<span class="t" style="left:0px;top:5.84px;font-size:12px;line-height:16px;color:#111;font-weight:400;text-align:left;">AXMK/PE 4x185</span>
</div>
<div style="left:342px;top:595px;width:64px;height:25px;overflow:hidden">
<span class="t" style="left:0px;top:5.84px;font-size:12px;line-height:16px;color:#111;font-weight:400;text-align:left;">4x185 S Power</span>
</div>
<div style="left:416px;top:595px;width:69px;height:25px;overflow:hidden">
<span class="t" style="left:0px;top:5.84px;font-size:12px;line-height:16px;color:#111;font-weight:400;text-align:left;">REKA</span>
</div>
<div style="left:495px;top:595px;width:68px;height:25px;overflow:hidden">
<span class="t" style="left:0px;top:5.84px;font-size:12px;line-height:16px;color:#111;font-weight:400;text-align:left;">Alumiinivoimakaapeli</span>
</div>
<div style="left:573px;top:595px;width:68px;height:25px;overflow:hidden">
<span class="t" style="left:0px;top:5.84px;font-size:12px;line-height:16px;color:#111;font-weight:400;text-align:left;">Aluminium power cable</span>
</div>
<div style="left:651px;top:595px;width:47px;height:25px;overflow:hidden">
<span class="t" style="left:0px;top:5.84px;font-size:12px;line-height:16px;color:#111;font-weight:400;text-align:left;">46</span>
</div>
<div style="left:708px;top:595px;width:36px;height:25px;overflow:hidden">
<span class="t" style="left:0px;top:5.84px;font-size:12px;line-height:16px;color:#111;font-weight:400;text-align:left;">2608</span>
</div>
<div style="left:754px;top:602px;width:13px;height:13px;border:1px solid #8c8c8c;background:#fff;"></div>
<div style="left:756px;top:604px;width:9px;height:9px;border:1px solid #d0d0d0;background:linear-gradient(#f4f4f4,#fff);"></div>
<div style="left:813px;top:602px;width:13px;height:13px;border:1px solid #8c8c8c;background:#fff;"></div>
<div style="left:815px;top:604px;width:9px;height:9px;border:1px solid #d0d0d0;background:linear-gradient(#f4f4f4,#fff);"></div>
<div style="left:887px;top:602px;width:13px;height:13px;border:1px solid #8c8c8c;background:#fff;"></div>
<div style="left:889px;top:604px;width:9px;height:9px;border:1px solid #d0d0d0;background:linear-gradient(#f4f4f4,#fff);"></div>
<div style="left:938px;top:595px;width:158px;height:25px;overflow:hidden">
<span class="t" style="left:0px;top:5.84px;font-size:12px;line-height:16px;color:#111;font-weight:400;text-align:left;">0.6/1 (1.2) kV</span>
</div>
<div style="left:44px;top:621px;width:24px;height:24px;background:#e3e3e3;box-shadow:inset 0 0 0 1px #fff;"></div>
<div style="left:77px;top:629px;width:9px;height:9px"><svg width="9" height="9" viewBox="0 0 9 9"><rect x="0" y="0" width="9" height="9" fill="url(#pbs)"/><rect x="1" y="1" width="7" height="7" fill="url(#pb)"/><path d="M2.1 4.5 H6.9 M4.5 2.1 V6.9" stroke="#000" stroke-width="1.25"/></svg></div>
<div style="left:98px;top:620px;width:55px;height:25px;overflow:hidden">
<span class="t" style="left:0px;top:5.84px;font-size:12px;line-height:16px;color:#111;font-weight:400;text-align:left;">0626292</span>
</div>
<div style="left:160px;top:620px;width:74px;height:25px;overflow:hidden">
<span class="t" style="left:0px;top:5.84px;font-size:12px;line-height:16px;color:#1b6fd6;font-weight:400;text-align:left;text-decoration:underline;text-underline-offset:4.4px;text-decoration-thickness:1px;">0626292</span>
</div>
<div style="left:278px;top:620px;width:54px;height:25px;overflow:hidden">
<span class="t" style="left:0px;top:5.84px;font-size:12px;line-height:16px;color:#111;font-weight:400;text-align:left;">AXMK/PE 4x185</span>
</div>
<div style="left:342px;top:620px;width:64px;height:25px;overflow:hidden">
<span class="t" style="left:0px;top:5.84px;font-size:12px;line-height:16px;color:#111;font-weight:400;text-align:left;">4x185 S Power</span>
</div>
<div style="left:416px;top:620px;width:69px;height:25px;overflow:hidden">
<span class="t" style="left:0px;top:5.84px;font-size:12px;line-height:16px;color:#111;font-weight:400;text-align:left;">REKA</span>
</div>
<div style="left:495px;top:620px;width:68px;height:25px;overflow:hidden">
<span class="t" style="left:0px;top:5.84px;font-size:12px;line-height:16px;color:#111;font-weight:400;text-align:left;">Alumiinivoimakaapeli</span>
</div>
<div style="left:573px;top:620px;width:68px;height:25px;overflow:hidden">
<span class="t" style="left:0px;top:5.84px;font-size:12px;line-height:16px;color:#111;font-weight:400;text-align:left;">Aluminium power cable</span>
</div>
<div style="left:651px;top:620px;width:47px;height:25px;overflow:hidden">
<span class="t" style="left:0px;top:5.84px;font-size:12px;line-height:16px;color:#111;font-weight:400;text-align:left;">46</span>
</div>
<div style="left:708px;top:620px;width:36px;height:25px;overflow:hidden">
<span class="t" style="left:0px;top:5.84px;font-size:12px;line-height:16px;color:#111;font-weight:400;text-align:left;">2608</span>
</div>
<div style="left:754px;top:627px;width:13px;height:13px;border:1px solid #8c8c8c;background:#fff;"></div>
<div style="left:756px;top:629px;width:9px;height:9px;border:1px solid #d0d0d0;background:linear-gradient(#f4f4f4,#fff);"></div>
<div style="left:813px;top:627px;width:13px;height:13px;border:1px solid #8c8c8c;background:#fff;"></div>
<div style="left:815px;top:629px;width:9px;height:9px;border:1px solid #d0d0d0;background:linear-gradient(#f4f4f4,#fff);"></div>
<div style="left:887px;top:627px;width:13px;height:13px;border:1px solid #8c8c8c;background:#fff;"></div>
<div style="left:889px;top:629px;width:9px;height:9px;border:1px solid #d0d0d0;background:linear-gradient(#f4f4f4,#fff);"></div>
<div style="left:938px;top:620px;width:158px;height:25px;overflow:hidden">
<span class="t" style="left:0px;top:5.84px;font-size:12px;line-height:16px;color:#111;font-weight:400;text-align:left;">0.6/1 (1.2) kV</span>
</div>
<div style="left:44px;top:646px;width:24px;height:24px;background:#e3e3e3;box-shadow:inset 0 0 0 1px #fff;"></div>
<div style="left:77px;top:654px;width:9px;height:9px"><svg width="9" height="9" viewBox="0 0 9 9"><rect x="0" y="0" width="9" height="9" fill="url(#pbs)"/><rect x="1" y="1" width="7" height="7" fill="url(#pb)"/><path d="M2.1 4.5 H6.9 M4.5 2.1 V6.9" stroke="#000" stroke-width="1.25"/></svg></div>
<div style="left:98px;top:645px;width:55px;height:25px;overflow:hidden">
<span class="t" style="left:0px;top:5.84px;font-size:12px;line-height:16px;color:#111;font-weight:400;text-align:left;">0626292</span>
</div>
<div style="left:160px;top:645px;width:74px;height:25px;overflow:hidden">
<span class="t" style="left:0px;top:5.84px;font-size:12px;line-height:16px;color:#1b6fd6;font-weight:400;text-align:left;text-decoration:underline;text-underline-offset:4.4px;text-decoration-thickness:1px;">0626292</span>
</div>
<div style="left:278px;top:645px;width:54px;height:25px;overflow:hidden">
<span class="t" style="left:0px;top:5.84px;font-size:12px;line-height:16px;color:#111;font-weight:400;text-align:left;">AXMK/PE 4x185</span>
</div>
<div style="left:342px;top:645px;width:64px;height:25px;overflow:hidden">
<span class="t" style="left:0px;top:5.84px;font-size:12px;line-height:16px;color:#111;font-weight:400;text-align:left;">4x185 S Power</span>
</div>
<div style="left:416px;top:645px;width:69px;height:25px;overflow:hidden">
<span class="t" style="left:0px;top:5.84px;font-size:12px;line-height:16px;color:#111;font-weight:400;text-align:left;">REKA</span>
</div>
<div style="left:495px;top:645px;width:68px;height:25px;overflow:hidden">
<span class="t" style="left:0px;top:5.84px;font-size:12px;line-height:16px;color:#111;font-weight:400;text-align:left;">Alumiinivoimakaapeli</span>
</div>
<div style="left:573px;top:645px;width:68px;height:25px;overflow:hidden">
<span class="t" style="left:0px;top:5.84px;font-size:12px;line-height:16px;color:#111;font-weight:400;text-align:left;">Aluminium power cable</span>
</div>
<div style="left:651px;top:645px;width:47px;height:25px;overflow:hidden">
<span class="t" style="left:0px;top:5.84px;font-size:12px;line-height:16px;color:#111;font-weight:400;text-align:left;">46</span>
</div>
<div style="left:708px;top:645px;width:36px;height:25px;overflow:hidden">
<span class="t" style="left:0px;top:5.84px;font-size:12px;line-height:16px;color:#111;font-weight:400;text-align:left;">2608</span>
</div>
<div style="left:754px;top:652px;width:13px;height:13px;border:1px solid #8c8c8c;background:#fff;"></div>
<div style="left:756px;top:654px;width:9px;height:9px;border:1px solid #d0d0d0;background:linear-gradient(#f4f4f4,#fff);"></div>
<div style="left:813px;top:652px;width:13px;height:13px;border:1px solid #8c8c8c;background:#fff;"></div>
<div style="left:815px;top:654px;width:9px;height:9px;border:1px solid #d0d0d0;background:linear-gradient(#f4f4f4,#fff);"></div>
<div style="left:887px;top:652px;width:13px;height:13px;border:1px solid #8c8c8c;background:#fff;"></div>
<div style="left:889px;top:654px;width:9px;height:9px;border:1px solid #d0d0d0;background:linear-gradient(#f4f4f4,#fff);"></div>
<div style="left:938px;top:645px;width:158px;height:25px;overflow:hidden">
<span class="t" style="left:0px;top:5.84px;font-size:12px;line-height:16px;color:#111;font-weight:400;text-align:left;">0.6/1 (1.2) kV</span>
</div>
<div style="left:69px;top:620px;width:2000px;height:1px;background:#d0d0d0;"></div>
<div style="left:43px;top:620px;width:26px;height:1px;background:#8a8a8a;"></div>
<div style="left:69px;top:645px;width:2000px;height:1px;background:#d0d0d0;"></div>
<div style="left:43px;top:645px;width:26px;height:1px;background:#8a8a8a;"></div>
<div style="left:69px;top:670px;width:2000px;height:1px;background:#d0d0d0;"></div>
<div style="left:43px;top:670px;width:26px;height:1px;background:#8a8a8a;"></div>
<div style="left:154px;top:595px;width:1px;height:75px;background:#cfcfcf;"></div>
<div style="left:238px;top:595px;width:1px;height:75px;background:#cfcfcf;"></div>
<div style="left:272px;top:595px;width:1px;height:75px;background:#cfcfcf;"></div>
<div style="left:336px;top:595px;width:1px;height:75px;background:#cfcfcf;"></div>
<div style="left:410px;top:595px;width:1px;height:75px;background:#cfcfcf;"></div>
<div style="left:489px;top:595px;width:1px;height:75px;background:#cfcfcf;"></div>
<div style="left:567px;top:595px;width:1px;height:75px;background:#cfcfcf;"></div>
<div style="left:645px;top:595px;width:1px;height:75px;background:#cfcfcf;"></div>
<div style="left:702px;top:595px;width:1px;height:75px;background:#cfcfcf;"></div>
<div style="left:748px;top:595px;width:1px;height:75px;background:#cfcfcf;"></div>
<div style="left:807px;top:595px;width:1px;height:75px;background:#cfcfcf;"></div>
<div style="left:881px;top:595px;width:1px;height:75px;background:#cfcfcf;"></div>
<div style="left:932px;top:595px;width:1px;height:75px;background:#cfcfcf;"></div>
<div style="left:68px;top:595px;width:1px;height:75px;background:#8a8a8a;"></div>
<div style="left:95px;top:595px;width:1px;height:75px;background:#767676;"></div>
<div style="left:96px;top:595px;width:2px;height:75px;background:linear-gradient(90deg,rgba(0,0,0,0.22),rgba(0,0,0,0));"></div>
<div style="left:94px;top:569px;width:1px;height:101px;background:#fff;"></div>
<div style="left:44px;top:671px;width:2000px;height:16px;background:#e4e4e4;border-top:1px solid #6a6a6a;"></div>
<span class="t" style="left:54px;top:671.84px;font-size:12px;line-height:16px;color:#111;font-weight:400;text-align:left;"><b>Quantity:</b> 3</span>
<div style="left:44px;top:687px;width:2000px;height:1px;background:#4a4a4a;"></div>
</div>
<div style="left:12px;top:694px;width:25px;height:1px;background:#8a8a8a;"></div>
<div style="left:12px;top:695px;width:24px;height:24px;background:linear-gradient(#fafafa,#e2e2e2);box-shadow:inset 1px 1px 0 #fff,inset -1px -1px 0 #fff;"></div>
<div style="left:12px;top:719px;width:25px;height:1px;background:#8a8a8a;"></div>
<div style="left:36px;top:694px;width:1px;height:26px;background:#8a8a8a;"></div>
<div style="left:20px;top:702px;width:8px;height:10px"><svg width="8" height="10" viewBox="0 0 8 10"><path d="M1.2 1 L6.4 5 L1.2 9" fill="none" stroke="#8a8a8a" stroke-width="1.8"/></svg></div>
<div style="left:37px;top:694px;width:961px;height:25px;background:linear-gradient(#eec49e,#ecd6a4);box-shadow:inset 0 1px 0 #fff,inset 0 2px 0 #f1d890,inset 0 -1px 0 #fff,inset 0 -2px 0 #f0b43a;"></div>
<div style="left:37px;top:694px;width:26px;height:25px;background:#fff;"></div>
<div style="left:38px;top:696px;width:24px;height:22px;background:linear-gradient(#f8ceaa,#f8e6aa);border:1px solid #f4c040;border-radius:2px;"></div>
<div style="left:45px;top:703px;width:9px;height:9px"><svg width="9" height="9" viewBox="0 0 9 9"><rect x="0" y="0" width="9" height="9" fill="url(#pbs)"/><rect x="1" y="1" width="7" height="7" fill="url(#pb)"/><path d="M2.1 4.5 H6.9 M4.5 2.1 V6.9" stroke="#000" stroke-width="1.25"/></svg></div>
<div style="left:63px;top:696px;width:148px;height:22px;border:1px solid #6a6a6a;box-shadow:inset 1px 1px 0 rgba(255,255,255,0.45);"></div>
<div style="left:212px;top:696px;width:1px;height:21px;background:rgba(255,255,255,0.55);"></div>
<div style="left:327px;top:696px;width:1px;height:21px;background:rgba(255,255,255,0.55);"></div>
<div style="left:964px;top:696px;width:1px;height:21px;background:rgba(255,255,255,0.55);"></div>
<span class="t" style="left:67px;top:701.48px;font-size:11.6px;line-height:15px;color:#111;font-weight:400;text-align:left;">Cable package</span>
<div style="left:328px;top:694px;width:636px;height:25px;overflow:hidden">
<span class="t" style="left:5px;top:7.50px;font-size:11.55px;line-height:15px;color:#111;font-weight:400;text-align:left;">(AMCMK 4x70/21 AN) + (IKOSAFE-S 4x70/35) + (LKM-HF 4x10) + (LKSM-HF 4x35) + (MMO 7x1,5) + (SE-N1XE-R 5G16)</span>
</div>
<span class="t" style="left:970px;top:700.84px;font-size:12px;line-height:16px;color:#111;font-weight:400;text-align:left;">(4x10)</span>
</div>
<div style="left:12px;top:732px;width:986px;height:17px;background:#e6e6e6;border-top:1px solid #8a8a8a;"></div>
<span class="t" style="left:22px;top:733.84px;font-size:12px;line-height:16px;color:#111;font-weight:400;text-align:left;"><b>Quantity:</b> 2</span>
<div style="left:167px;top:733px;width:831px;height:16px;background:#f0f0f0;"></div>
<div style="left:138px;top:737px;width:10px;height:8px"><svg width="10" height="8" viewBox="0 0 10 8"><path d="M0 4 L4.5 0.5 V7.5 Z M4 4 L8.5 0.5 V7.5 Z" fill="#444"/></svg></div>
<div style="left:152px;top:733px;width:15px;height:16px;background:#f0f0f0;"></div>
<div style="left:156px;top:737px;width:6px;height:8px"><svg width="6" height="8"><path d="M0 4 L5 0 V8 Z" fill="#111"/></svg></div>
<div style="left:167px;top:733px;width:610px;height:15px;border:1px solid #6e6e6e;border-radius:2px;background:linear-gradient(#fff 0%,#ececec 40%,#c4c4c4 50%,#bcbcbc 100%);"></div>
<div style="left:471px;top:737px;width:6px;height:8px"><svg width="6" height="8"><path d="M0.5 0 V8 M2.5 0 V8 M4.5 0 V8" stroke="#222" stroke-width="1"/></svg></div>
<div style="left:973px;top:737px;width:6px;height:8px"><svg width="6" height="8"><path d="M0 0 L5 4 L0 8 Z" fill="#111"/></svg></div>
<div style="left:982px;top:733px;width:16px;height:16px;background:#e4e4e4;"></div>
<div style="left:985px;top:737px;width:10px;height:8px"><svg width="10" height="8" viewBox="0 0 10 8"><path d="M10 4 L5.5 0.5 V7.5 Z M6 4 L1.5 0.5 V7.5 Z" fill="#444"/></svg></div>
<div style="left:11px;top:760px;width:150px;height:22px;border:1px solid #7c7c7c;border-radius:2px;background:linear-gradient(#f6f6f6 0%,#e6e6e6 45%,#b4b4b4 50%,#c9c9c9 88%,#ffffff 92%,#ffffff 100%);box-shadow:inset 1px 0 0 #fff,inset -1px 0 0 #fff,inset 0 1px 0 #fff;"></div>
<div style="left:11px;top:760px;width:150px;height:22px;overflow:hidden">
<span class="t" style="left:0px;top:4.34px;font-size:12px;line-height:16px;color:#1a1a1a;font-weight:400;text-align:center;width:150px;overflow:hidden;">New...</span>
</div>
<div style="left:167px;top:760px;width:151px;height:22px;border:1px solid #7c7c7c;border-radius:2px;background:linear-gradient(#f6f6f6 0%,#e6e6e6 45%,#b4b4b4 50%,#c9c9c9 88%,#ffffff 92%,#ffffff 100%);box-shadow:inset 1px 0 0 #fff,inset -1px 0 0 #fff,inset 0 1px 0 #fff;"></div>
<div style="left:167px;top:760px;width:151px;height:22px;overflow:hidden">
<span class="t" style="left:0px;top:4.34px;font-size:12px;line-height:16px;color:#1a1a1a;font-weight:400;text-align:center;width:151px;overflow:hidden;">Edit...</span>
</div>
<div style="left:324px;top:760px;width:150px;height:22px;border:1px solid #7c7c7c;border-radius:2px;background:linear-gradient(#f6f6f6 0%,#e6e6e6 45%,#b4b4b4 50%,#c9c9c9 88%,#ffffff 92%,#ffffff 100%);box-shadow:inset 1px 0 0 #fff,inset -1px 0 0 #fff,inset 0 1px 0 #fff;"></div>
<div style="left:324px;top:760px;width:150px;height:22px;overflow:hidden">
<span class="t" style="left:0px;top:4.34px;font-size:12px;line-height:16px;color:#1a1a1a;font-weight:400;text-align:center;width:150px;overflow:hidden;">Remove from project</span>
</div>
<div style="left:480px;top:760px;width:151px;height:22px;border:1px solid #7c7c7c;border-radius:2px;background:linear-gradient(#f6f6f6 0%,#e6e6e6 45%,#b4b4b4 50%,#c9c9c9 88%,#ffffff 92%,#ffffff 100%);box-shadow:inset 1px 0 0 #fff,inset -1px 0 0 #fff,inset 0 1px 0 #fff;"></div>
<div style="left:480px;top:760px;width:151px;height:22px;overflow:hidden">
<span class="t" style="left:0px;top:4.34px;font-size:12px;line-height:16px;color:#1a1a1a;font-weight:400;text-align:center;width:151px;overflow:hidden;">Import to project...</span>
</div>
<div style="left:637px;top:760px;width:150px;height:22px;border:1px solid #7c7c7c;border-radius:2px;background:linear-gradient(#f6f6f6 0%,#e6e6e6 45%,#b4b4b4 50%,#c9c9c9 88%,#ffffff 92%,#ffffff 100%);box-shadow:inset 1px 0 0 #fff,inset -1px 0 0 #fff,inset 0 1px 0 #fff;"></div>
<div style="left:637px;top:760px;width:150px;height:22px;overflow:hidden">
<span class="t" style="left:0px;top:4.34px;font-size:12px;line-height:16px;color:#1a1a1a;font-weight:400;text-align:center;width:150px;overflow:hidden;">Copy to defaults</span>
</div>
<div style="left:930px;top:760px;width:69px;height:22px;border:1px solid #7c7c7c;border-radius:2px;background:linear-gradient(#f6f6f6 0%,#e6e6e6 45%,#b4b4b4 50%,#c9c9c9 88%,#ffffff 92%,#ffffff 100%);box-shadow:inset 1px 0 0 #fff,inset -1px 0 0 #fff,inset 0 1px 0 #fff;"></div>
<div style="left:930px;top:760px;width:69px;height:22px;overflow:hidden">
<span class="t" style="left:0px;top:4.34px;font-size:12px;line-height:16px;color:#1a1a1a;font-weight:400;text-align:center;width:69px;overflow:hidden;">Close</span>
</div>
<div style="left:903px;top:760px;width:22px;height:22px"><svg width="22" height="22" viewBox="0 0 22 22"><defs><radialGradient id="hg" cx="0.35" cy="0.25" r="0.85"><stop offset="0" stop-color="#8ab8f4"/><stop offset="0.5" stop-color="#3a78d8"/><stop offset="1" stop-color="#1c4aa8"/></radialGradient></defs><circle cx="11" cy="11" r="10.2" fill="#f6f6f6" stroke="#b8b8b8" stroke-width="0.8"/><circle cx="11" cy="11" r="8.3" fill="url(#hg)"/><text x="11" y="16.3" text-anchor="middle" font-family="Liberation Sans" font-weight="700" font-size="15" fill="#fff">?</text></svg></div>
<div style="left:0;top:0;width:1010px;height:793px;border:1px solid #a2a2a2;border-radius:8px;pointer-events:none"></div>
</div></body></html>
